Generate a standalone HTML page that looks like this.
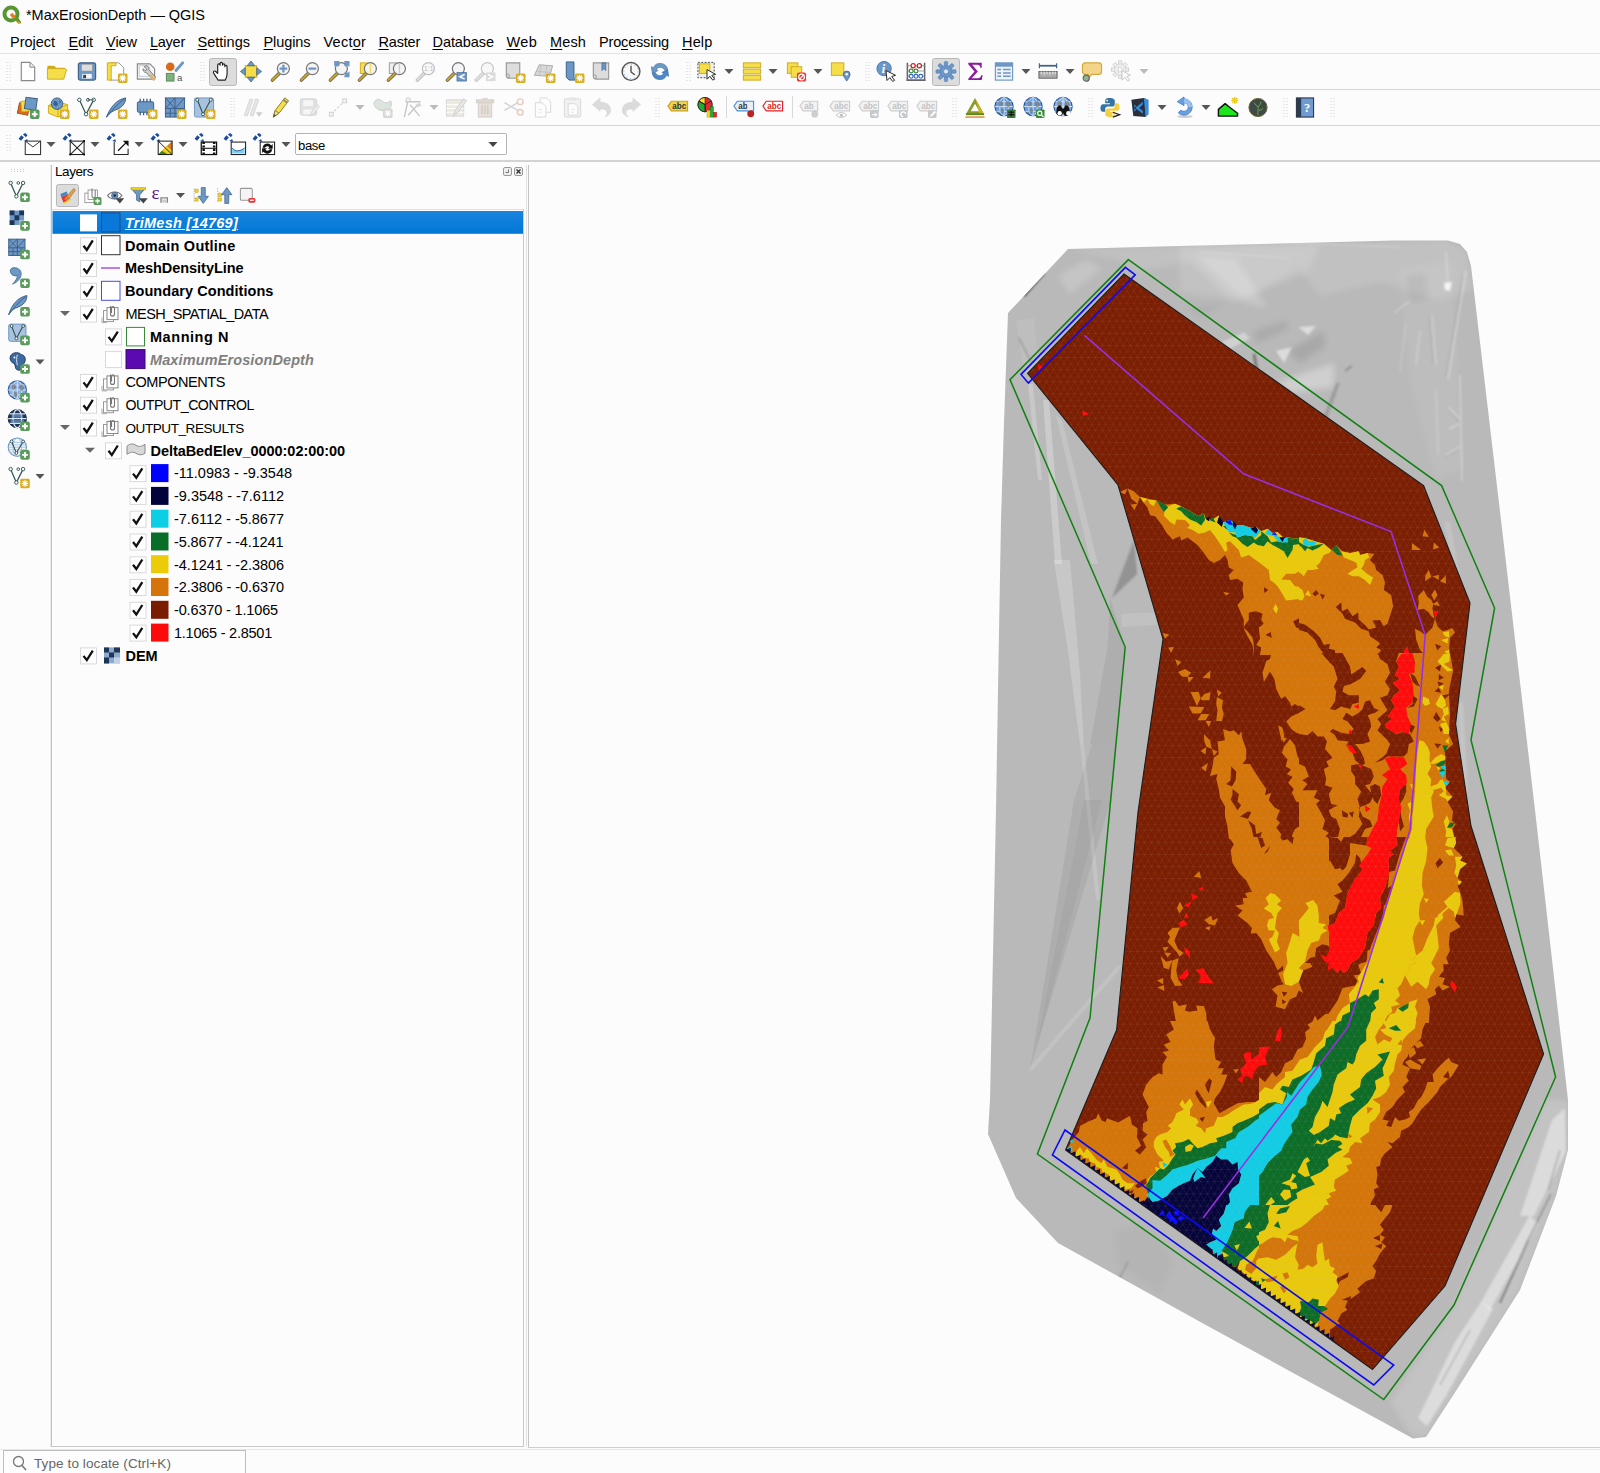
<!DOCTYPE html>
<html><head><meta charset="utf-8"><title>QGIS</title>
<style>
html,body{margin:0;padding:0;}
body{width:1600px;height:1473px;overflow:hidden;background:#fcfcfc;position:relative;font-family:'Liberation Sans',sans-serif;}
.t{position:absolute;white-space:pre;}
.ln{position:absolute;background:#d9d9d9;}
u{text-decoration:underline;text-underline-offset:2px;text-decoration-thickness:1px;}
svg{position:absolute;left:0;top:0;}
</style></head><body>
<!-- frame lines -->
<div class="ln" style="left:0;top:53px;width:1600px;height:1px;background:#e3e3e3"></div>
<div class="ln" style="left:0;top:89px;width:1600px;height:1px;background:#d6d6d6"></div>
<div class="ln" style="left:0;top:125px;width:1600px;height:1px;background:#d6d6d6"></div>
<div class="ln" style="left:0;top:160px;width:1600px;height:2px;background:#d3d3d3"></div>
<div class="ln" style="left:50px;top:165px;width:1px;height:1282px;background:#ececec"></div>
<div class="ln" style="left:51px;top:165px;width:1px;height:1282px;background:#c2c2c2"></div>
<div class="ln" style="left:52px;top:209px;width:472px;height:1px;background:#e0e0e0"></div>
<div class="ln" style="left:523px;top:209px;width:1px;height:1238px;background:#c8c8c8"></div>
<div class="ln" style="left:52px;top:1446px;width:472px;height:1px;background:#c8c8c8"></div>
<div class="ln" style="left:526px;top:165px;width:1px;height:1282px;background:#e2e2e2"></div>
<div class="ln" style="left:528px;top:165px;width:1px;height:1282px;background:#c4c4c4"></div>
<div class="ln" style="left:528px;top:1447px;width:1072px;height:1px;background:#cfcfcf"></div>
<div class="ln" style="left:0;top:1449px;width:1600px;height:1px;background:#e6e6e6"></div>
<!-- locator -->
<div style="position:absolute;left:3px;top:1450px;width:243px;height:23px;border:1px solid #bdbdbd;border-bottom:none;background:#fdfdfd;box-sizing:border-box"></div>
<svg width="1600" height="1473" viewBox="0 0 1600 1473">
<defs>
<linearGradient id="selg" x1="0" y1="0" x2="0" y2="1"><stop offset="0" stop-color="#1984de"/><stop offset="1" stop-color="#0277d6"/></linearGradient>
<clipPath id="mesh"><polygon points="1124,274 1423.6,485.6 1470,603 1455.6,724 1471,826 1543.6,1054 1445,1286 1372.5,1369.5 1065.6,1150 1116.6,1030 1138,812 1163,639 1118,485 1027.6,373.4"/></clipPath>
<clipPath id="dem"><polygon points="1068,249 1180,246 1280,243.6 1394,240.4 1448,240.4 1460,244 1467,252 1471,266 1501,520 1535,810 1568,1100 1568,1150 1556,1196 1520,1290 1454,1394 1426,1437 1413,1438.5 1300,1376.7 1200,1321.7 1058,1243 1016,1198 988,1134 990,1100 996,810 999,632 1001,520 1004,422 1008,313"/></clipPath>
<filter id="b0" x="-20%" y="-20%" width="140%" height="140%"><feGaussianBlur stdDeviation=".5"/></filter><filter id="b1" x="-20%" y="-20%" width="140%" height="140%"><feGaussianBlur stdDeviation=".9"/></filter><filter id="b2" x="-20%" y="-20%" width="140%" height="140%"><feGaussianBlur stdDeviation="3"/></filter>
<pattern id="tri" width="7" height="12.120" patternUnits="userSpaceOnUse"><path d="M0 0h7M0 6.060h7M0 0l3.500 6.060L7 0M0 12.120l3.500-6.060L7 12.120" fill="none" stroke="#c9a58f" stroke-width=".45" opacity=".38"/></pattern>
</defs>
<!-- qgis logo -->
<g transform="translate(2 5)"><circle cx="9" cy="9" r="6.500" fill="none" stroke="#589632" stroke-width="4"/><path d="M9 9l9 9" stroke="#ee7913" stroke-width="3.200"/><path d="M12.500 12.500l6 6" stroke="#f0c020" stroke-width="1.600"/><path d="M15 10.500l4.500 8-8-4.500z" fill="#589632"/></g>
<!-- locator icon -->
<circle cx="18.500" cy="1461.500" r="5" fill="none" stroke="#777" stroke-width="1.300"/><path d="M22 1465.500l4 4.500" stroke="#777" stroke-width="1.600"/>
<path d="M7 62v20M10 62v20" stroke="#d2d2d2" stroke-width="1" stroke-dasharray="1 2"/><path d="M7 98v20M10 98v20" stroke="#d2d2d2" stroke-width="1" stroke-dasharray="1 2"/><path d="M7 135v18M10 135v18" stroke="#d2d2d2" stroke-width="1" stroke-dasharray="1 2"/><path d="M201 62v20M204 62v20" stroke="#d2d2d2" stroke-width="1" stroke-dasharray="1 2"/><path d="M687 62v20M690 62v20" stroke="#d2d2d2" stroke-width="1" stroke-dasharray="1 2"/><path d="M866 62v20M869 62v20" stroke="#d2d2d2" stroke-width="1" stroke-dasharray="1 2"/><path d="M231 98v20M234 98v20" stroke="#d2d2d2" stroke-width="1" stroke-dasharray="1 2"/><path d="M656 98v20M659 98v20" stroke="#d2d2d2" stroke-width="1" stroke-dasharray="1 2"/><path d="M953 98v20M956 98v20" stroke="#d2d2d2" stroke-width="1" stroke-dasharray="1 2"/><path d="M1089 98v20M1092 98v20" stroke="#d2d2d2" stroke-width="1" stroke-dasharray="1 2"/><path d="M1284 98v20M1287 98v20" stroke="#d2d2d2" stroke-width="1" stroke-dasharray="1 2"/><path d="M1331 98v20M1334 98v20" stroke="#d2d2d2" stroke-width="1" stroke-dasharray="1 2"/><path d="M726.5 96v22M792.5 96v22" stroke="#d8d8d8"/><rect x="209.5" y="58.5" width="27" height="27" rx="2" fill="#dcdcdc" stroke="#b8b8b8"/><rect x="932.5" y="58.5" width="27" height="27" rx="2" fill="#dcdcdc" stroke="#b8b8b8"/><g transform="translate(16.5 60.0) scale(0.958)"><path d="M5 2.5h9l5 5v14H5z" fill="#fff" stroke="#888" stroke-width="1.2"/><path d="M14 2.5v5h5" fill="#eee" stroke="#888" stroke-width="1"/></g><g transform="translate(45.5 60.0) scale(0.958)"><path d="M2 6h7l2 2h9v3H2z" fill="#cfab1c"/><path d="M2 20V9h18l2 1-3 10z" fill="#f5de4a" stroke="#cfab1c" stroke-width="1"/></g><g transform="translate(75.5 60.0) scale(0.958)"><rect x="3" y="3" width="18" height="18" rx="2" fill="#6d97c4" stroke="#3b5f8a" stroke-width="1.2"/><rect x="6.5" y="4.5" width="11" height="7" fill="#ddd" stroke="#999" stroke-width=".6"/><rect x="7" y="14.5" width="10" height="5" fill="#f4f4f4"/><rect x="8" y="15.5" width="3" height="3.5" fill="#345"/></g><g transform="translate(104.5 60.0) scale(0.958)"><path d="M6 3h9l5 5v13H6z" fill="#fff" stroke="#999"/><path d="M3 3h9v3H7v15H3z" fill="#f5de4a" stroke="#cfab1c" stroke-width="1"/><rect x="14" y="14" width="10" height="10" rx="1.5" fill="#dcae1f"/><path d="M19 15.5v7M15.5 19h7M16.5 16.5l5 5M21.5 16.5l-5 5" stroke="#fff" stroke-width="1.3"/></g><g transform="translate(134.5 60.0) scale(0.958)"><path d="M3 4h13l5 5v11H3z" fill="#f6f6f6" stroke="#888" stroke-width="1.2"/><path d="M5 6h10v11H5z" fill="#fff" stroke="#b8cde4"/><path d="M10 7a3 3 0 0 1 5 3l7 8-2 3-8-8a3 3 0 0 1-3-4l2 2 2-1z" fill="#ccc" stroke="#666" stroke-width=".8"/><path d="M17 15l5 5-2 2-5-5z" fill="#e1b36a"/></g><g transform="translate(163.5 60.0) scale(0.958)"><circle cx="7" cy="7" r="4.5" fill="#d86a1c"/><rect x="3" y="14" width="8" height="8" fill="#7fb17f" stroke="#5a8c5a"/><path d="M13 11l7-8" stroke="#6d97c4" stroke-width="3" stroke-linecap="round"/><text x="14" y="22" font-size="10" font-family="Liberation Sans" fill="#555">a</text></g><g transform="translate(210.5 60.0) scale(0.958)"><path d="M8 21c-2-3-4-6-5-8 0-1.5 1.5-2 2.500-1l2 2V5.500c0-2 2.500-2 2.500 0V4c0-2 2.500-2 2.500 0v1.500c0-2 2.500-2 2.500 0V7c0-1.800 2.300-1.800 2.300 0v8c0 3-1 4.500-2 6z" fill="#fff" stroke="#222" stroke-width="1.2" stroke-linejoin="round"/></g><g transform="translate(239.5 60.0) scale(0.958)"><rect x="6" y="6" width="12" height="12" fill="#f5de4a" stroke="#cfab1c"/><path d="M12 1l4 5h-8zM12 23l4-5h-8zM1 12l5-4v8zM23 12l-5-4v8z" fill="#6d97c4" stroke="#3b5f8a" stroke-width=".8"/></g><g transform="translate(269.5 60.0) scale(0.958)"><path d="M3 21l7-7" stroke="#555" stroke-width="3.6" stroke-linecap="round"/><path d="M3 21l7-7" stroke="#caa52b" stroke-width="2.2" stroke-linecap="round"/><circle cx="14.5" cy="9" r="6.3" fill="#f4f4f4" stroke="#777" stroke-width="1.3"/><path d="M14.500 5v8M10.500 9h8" stroke="#6d97c4" stroke-width="2.4"/></g><g transform="translate(298.5 60.0) scale(0.958)"><path d="M3 21l7-7" stroke="#555" stroke-width="3.6" stroke-linecap="round"/><path d="M3 21l7-7" stroke="#caa52b" stroke-width="2.2" stroke-linecap="round"/><circle cx="14.5" cy="9" r="6.3" fill="#f4f4f4" stroke="#777" stroke-width="1.3"/><path d="M10.500 9h8" stroke="#6d97c4" stroke-width="2.4"/></g><g transform="translate(327.5 60.0) scale(0.958)"><path d="M3 21l7-7" stroke="#555" stroke-width="3.6" stroke-linecap="round"/><path d="M3 21l7-7" stroke="#caa52b" stroke-width="2.2" stroke-linecap="round"/><circle cx="14.5" cy="9" r="6.3" fill="#f4f4f4" stroke="#777" stroke-width="1.3"/><path d="M8 2h5l-5 5zM22 2v5l-5-5zM22 17v-5l-5 5zM8 12v4z" fill="#6d97c4"/><path d="M7 1h6l-2 2 2 2-2 2-2-2-2 2zM23 1v6l-2-2-2 2-2-2 2-2-2-2zM23 18h-6l2-2-2-2 2-2 2 2 2-2z" fill="#6d97c4"/></g><g transform="translate(356.5 60.0) scale(0.958)"><rect x="4" y="3" width="7" height="11" fill="#f5de4a" stroke="#cfab1c"/><path d="M3 21l7-7" stroke="#555" stroke-width="3.6" stroke-linecap="round"/><path d="M3 21l7-7" stroke="#caa52b" stroke-width="2.2" stroke-linecap="round"/><circle cx="14.5" cy="9" r="6.3" fill="#f4f4f4" stroke="#777" stroke-width="1.3"/><path d="M14.500 4v10" stroke="#f5de4a" stroke-width="1.5"/></g><g transform="translate(385.5 60.0) scale(0.958)"><rect x="4" y="3" width="7" height="11" fill="#eee" stroke="#999"/><path d="M3 21l7-7" stroke="#555" stroke-width="3.6" stroke-linecap="round"/><path d="M3 21l7-7" stroke="#caa52b" stroke-width="2.2" stroke-linecap="round"/><circle cx="14.5" cy="9" r="6.3" fill="#f4f4f4" stroke="#777" stroke-width="1.3"/><path d="M14.500 4v10" stroke="#ccc" stroke-width="1.5"/></g><g transform="translate(414.5 60.0) scale(0.958)"><g opacity=".45"><path d="M3 21l7-7" stroke="#555" stroke-width="3.6" stroke-linecap="round"/><path d="M3 21l7-7" stroke="#bbb" stroke-width="2.2" stroke-linecap="round"/><circle cx="14.5" cy="9" r="6.3" fill="#f4f4f4" stroke="#777" stroke-width="1.3"/><text x="10" y="12" font-size="7" font-family="Liberation Sans" fill="#666">1:1</text></g></g><g transform="translate(444.5 60.0) scale(0.958)"><path d="M3 21l7-7" stroke="#555" stroke-width="3.6" stroke-linecap="round"/><path d="M3 21l7-7" stroke="#caa52b" stroke-width="2.2" stroke-linecap="round"/><circle cx="14.5" cy="9" r="6.3" fill="#f4f4f4" stroke="#777" stroke-width="1.3"/><rect x="13" y="13" width="10" height="9" fill="#6d97c4" stroke="#3b5f8a" stroke-width=".6"/><path d="M21 15l-5 2.500 5 2.500" stroke="#fff" stroke-width="1.6" fill="none"/></g><g transform="translate(473.5 60.0) scale(0.958)"><g opacity=".4"><path d="M3 21l7-7" stroke="#555" stroke-width="3.6" stroke-linecap="round"/><path d="M3 21l7-7" stroke="#bbb" stroke-width="2.2" stroke-linecap="round"/><circle cx="14.5" cy="9" r="6.3" fill="#f4f4f4" stroke="#777" stroke-width="1.3"/><rect x="13" y="13" width="10" height="9" fill="#aaa"/><path d="M15 15l5 2.500-5 2.500" stroke="#fff" stroke-width="1.6" fill="none"/></g></g><g transform="translate(502.5 60.0) scale(0.958)"><path d="M4 3h14v16H7c-2 0-3-1-3-3z" fill="#ddd" stroke="#999" stroke-width="1.2"/><path d="M4 16c0-2 3-2 3 0v3" fill="none" stroke="#999"/><rect x="14" y="14" width="10" height="10" rx="1.5" fill="#dcae1f"/><path d="M19 15.5v7M15.5 19h7M16.5 16.5l5 5M21.5 16.5l-5 5" stroke="#fff" stroke-width="1.3"/></g><g transform="translate(532.5 60.0) scale(0.958)"><path d="M2 16l5-11 14 1-3 11z" fill="#d8d8d8" stroke="#aaa"/><path d="M5 12l14 1M9 5l-2 11M15 6l-2 11" stroke="#bbb" stroke-width=".8"/><rect x="14" y="14" width="10" height="10" rx="1.5" fill="#dcae1f"/><path d="M19 15.5v7M15.5 19h7M16.5 16.5l5 5M21.5 16.5l-5 5" stroke="#fff" stroke-width="1.3"/></g><g transform="translate(561.5 60.0) scale(0.958)"><path d="M5 2h8v16l3 3H8l-3-3z" fill="#6d97c4" stroke="#3b5f8a" stroke-width="1"/><rect x="14" y="14" width="10" height="10" rx="1.5" fill="#dcae1f"/><path d="M19 15.5v7M15.5 19h7M16.5 16.5l5 5M21.5 16.5l-5 5" stroke="#fff" stroke-width="1.3"/></g><g transform="translate(589.5 60.0) scale(0.958)"><path d="M4 3h16v17H7c-2 0-3-1-3-3z" fill="#ddd" stroke="#999" stroke-width="1.2"/><path d="M4 17c0-2 3-2 3 0v3" fill="none" stroke="#999"/><path d="M13 3h4v8l-2-2-2 2z" fill="#6d97c4" stroke="#3b5f8a" stroke-width=".7"/></g><g transform="translate(619.5 60.0) scale(0.958)"><circle cx="12" cy="12" r="9.300" fill="#fafafa" stroke="#555" stroke-width="1.5"/><circle cx="12" cy="12" r="7.500" fill="none" stroke="#6d97c4" stroke-width="1" stroke-dasharray="1 2.900"/><path d="M12 6v6.500l4 3" stroke="#555" stroke-width="1.5" fill="none"/></g><g transform="translate(648.5 60.0) scale(0.958)"><path d="M20 10a8 8 0 0 0-15-2l-2-1 1 7 6-3-2-1a5 5 0 0 1 9 1z" fill="#6d97c4" stroke="#4a78ad" stroke-width=".7"/><path d="M4 14a8 8 0 0 0 15 2l2 1-1-7-6 3 2 1a5 5 0 0 1-9-1z" fill="#4f86c6" stroke="#3b6ea5" stroke-width=".7"/></g><g transform="translate(695.5 60.0) scale(0.958)"><rect x="2.500" y="2.500" width="17" height="16" fill="#eee" stroke="#444" stroke-dasharray="2 1.500"/><rect x="4" y="4" width="11" height="10" fill="#f5de4a" stroke="#cfab1c"/><path d="M12 10l9 5-4 1 3 4-2 1-3-4-3 3z" fill="#fff" stroke="#222" stroke-width="1"/></g><g transform="translate(740.5 60.0) scale(0.958)"><rect x="3" y="3" width="18" height="5" fill="#f5de4a" stroke="#cfab1c"/><rect x="3" y="9.500" width="18" height="5" fill="#f5de4a" stroke="#cfab1c"/><rect x="3" y="16" width="18" height="5" fill="#f5de4a" stroke="#cfab1c"/></g><g transform="translate(784.5 60.0) scale(0.958)"><rect x="3" y="3" width="11" height="11" fill="#f5de4a" stroke="#cfab1c"/><rect x="7" y="7" width="11" height="11" fill="#f5de4a" stroke="#cfab1c"/><rect x="13" y="13" width="9.500" height="9.500" rx="2" fill="#e33"/><circle cx="17.800" cy="17.800" r="3" fill="none" stroke="#fff" stroke-width="1.300"/><path d="M15.800 19.800l4-4" stroke="#fff" stroke-width="1.300"/></g><g transform="translate(828.5 60.0) scale(0.958)"><rect x="3" y="3" width="13" height="13" fill="#f5de4a" stroke="#cfab1c"/><path d="M19 22c-2-3-3.500-5-3.500-7a3.500 3.500 0 0 1 7 0c0 2-1.500 4-3.500 7z" fill="#6d97c4" stroke="#3b5f8a" stroke-width=".8"/><circle cx="19" cy="15" r="1.300" fill="#fff"/></g><g transform="translate(874.5 60.0) scale(0.958)"><circle cx="10" cy="9" r="7.500" fill="#6d97c4" stroke="#4a78ad"/><text x="7.500" y="14" font-size="13" font-weight="700" font-style="italic" font-family="Liberation Serif" fill="#fff">i</text><path d="M12 11l10 5-4 1.200 3 4-2 1.200-3-4-3 3z" fill="#fff" stroke="#222" stroke-width="1"/></g><g transform="translate(904.5 60.0) scale(0.958)"><path d="M3 3v18M21 3v18M2 21h20" stroke="#666" stroke-width="1.600"/><path d="M3 6h18M3 11.500h18M3 17h18" stroke="#888" stroke-width=".8"/><circle cx="9" cy="6" r="2.200" fill="#fff" stroke="#c22" stroke-width="1.300"/><circle cx="15.500" cy="6" r="2.200" fill="#fff" stroke="#c22" stroke-width="1.300"/><circle cx="7" cy="11.500" r="2" fill="#fff" stroke="#3a8a3a" stroke-width="1.200"/><circle cx="12" cy="11.500" r="2" fill="#fff" stroke="#3a8a3a" stroke-width="1.200"/><circle cx="7" cy="17" r="2" fill="#fff" stroke="#36c" stroke-width="1.200"/><circle cx="12" cy="17" r="2" fill="#fff" stroke="#36c" stroke-width="1.200"/><circle cx="17" cy="17" r="2" fill="#fff" stroke="#36c" stroke-width="1.200"/></g><g transform="translate(934.5 60.0) scale(0.958)"><g transform="translate(12 12)"><g fill="#6d97c4" stroke="#4a7cc0" stroke-width=".6"><rect x="-1.800" y="-10.500" width="3.600" height="6" rx="1" transform="rotate(0)"/><rect x="-1.800" y="-10.500" width="3.600" height="6" rx="1" transform="rotate(45)"/><rect x="-1.800" y="-10.500" width="3.600" height="6" rx="1" transform="rotate(90)"/><rect x="-1.800" y="-10.500" width="3.600" height="6" rx="1" transform="rotate(135)"/><rect x="-1.800" y="-10.500" width="3.600" height="6" rx="1" transform="rotate(180)"/><rect x="-1.800" y="-10.500" width="3.600" height="6" rx="1" transform="rotate(225)"/><rect x="-1.800" y="-10.500" width="3.600" height="6" rx="1" transform="rotate(270)"/><rect x="-1.800" y="-10.500" width="3.600" height="6" rx="1" transform="rotate(315)"/></g><circle r="6" fill="#6d97c4" stroke="#4a7cc0" stroke-width=".6"/><circle r="2.600" fill="#dfe6ee" stroke="#4a7cc0" stroke-width=".6"/></g></g><g transform="translate(963.5 60.0) scale(0.958)"><path d="M5 3h14v5h-1.500c0-2-1-3-3-3H9l6 7-6.500 7H15c2 0 3-1 3.500-3H20l-1 5H5v-1.500L11.500 12 5 4.500z" fill="#8a1aa0"/></g><g transform="translate(992.5 60.0) scale(0.958)"><rect x="3" y="3" width="18" height="18" fill="#eef3fa" stroke="#6d97c4" stroke-width="1.200"/><rect x="3" y="3" width="18" height="4" fill="#6d97c4"/><path d="M5 10h4M11 10h8M5 13.500h4M11 13.500h8M5 17h4M11 17h8" stroke="#6d97c4" stroke-width="1.600"/></g><g transform="translate(1036.5 60.0) scale(0.958)"><path d="M3 6h18" stroke="#3b5f8a" stroke-width="1.800"/><path d="M3 3.500v5M21 3.500v5" stroke="#3b5f8a" stroke-width="1.200"/><rect x="2.500" y="12" width="19" height="7" fill="#aaa" stroke="#666"/><path d="M5 12v3M8 12v4M11 12v3M14 12v4M17 12v3M19.500 12v3" stroke="#eee" stroke-width="1"/></g><g transform="translate(1080.5 60.0) scale(0.958)"><path d="M5 3h14a3 3 0 0 1 3 3v6a3 3 0 0 1-3 3h-7l-4 4v-4H5a3 3 0 0 1-3-3V6a3 3 0 0 1 3-3z" fill="#f3d488" stroke="#d1a93c" stroke-width="1.200"/><circle cx="6" cy="19" r="3.200" fill="#8fb58f" stroke="#666" stroke-width="1.200"/></g><g transform="translate(1110.5 60.0) scale(0.958)"><g opacity=".4"><g transform="translate(10 10)" fill="#ddd" stroke="#888" stroke-width=".8"><rect x="-1.800" y="-9" width="3.600" height="5" transform="rotate(0)"/><rect x="-1.800" y="-9" width="3.600" height="5" transform="rotate(45)"/><rect x="-1.800" y="-9" width="3.600" height="5" transform="rotate(90)"/><rect x="-1.800" y="-9" width="3.600" height="5" transform="rotate(135)"/><rect x="-1.800" y="-9" width="3.600" height="5" transform="rotate(180)"/><rect x="-1.800" y="-9" width="3.600" height="5" transform="rotate(225)"/><rect x="-1.800" y="-9" width="3.600" height="5" transform="rotate(270)"/><rect x="-1.800" y="-9" width="3.600" height="5" transform="rotate(315)"/><circle r="6"/></g><path d="M8 7l6 3-6 3z" fill="#fff" stroke="#999"/><path d="M12 11l9 5-4 1 3 4-2 1-3-4-3 3z" fill="#fff" stroke="#777" stroke-width="1"/></g></g><path d="M724.5 69.0h9l-4.5 5z" fill="#555"/><path d="M768.5 69.0h9l-4.5 5z" fill="#555"/><path d="M813.5 69.0h9l-4.5 5z" fill="#555"/><path d="M1021.5 69.0h9l-4.5 5z" fill="#555"/><path d="M1065.5 69.0h9l-4.5 5z" fill="#555"/><path d="M1139.5 69.0h9l-4.5 5z" fill="#bbb"/><g transform="translate(16.5 96.0) scale(0.958)"><rect x="2" y="8" width="11" height="11" fill="#d86a1c" stroke="#a64f12" transform="rotate(12 7 13)"/><rect x="5" y="5" width="11" height="11" fill="#f5de4a" stroke="#cfab1c" transform="rotate(-6 10 10)"/><rect x="9" y="2" width="12" height="12" fill="#6d97c4" stroke="#3b5f8a" transform="rotate(8 15 8)"/><rect x="14" y="14" width="10" height="10" rx="2" fill="#5a9a5a"/><path d="M19 16v6M16 19h6" stroke="#fff" stroke-width="2"/></g><g transform="translate(46.5 96.0) scale(0.958)"><path d="M2 10l9-4 11 3v9l-10 4-10-4z" fill="#f5de4a" stroke="#cfab1c"/><path d="M2 10l10 4v8" fill="none" stroke="#cfab1c"/><path d="M12 14l10-5" stroke="#cfab1c"/><circle cx="11" cy="8" r="6" fill="#6d97c4" stroke="#3b5f8a"/><path d="M8 5l3 1 1 3-2 2-3-2zM13 4l2 2-1 2z" fill="#35618f"/><rect x="14" y="14" width="10" height="10" rx="1.5" fill="#dcae1f"/><path d="M19 15.5v7M15.5 19h7M16.5 16.5l5 5M21.5 16.5l-5 5" stroke="#fff" stroke-width="1.3"/></g><g transform="translate(75.5 96.0) scale(0.958)"><path d="M4 4l7 15 8-15" fill="none" stroke="#355" stroke-width="1.300"/><circle cx="4" cy="4" r="1.800" fill="#fff" stroke="#355"/><circle cx="11" cy="19" r="1.800" fill="#fff" stroke="#355"/><circle cx="19" cy="4" r="1.800" fill="#fff" stroke="#355"/><circle cx="13" cy="4" r="1.500" fill="#fff" stroke="#355"/><path d="M13 4h6" stroke="#355"/><rect x="14" y="14" width="10" height="10" rx="1.5" fill="#dcae1f"/><path d="M19 15.5v7M15.5 19h7M16.5 16.5l5 5M21.5 16.5l-5 5" stroke="#fff" stroke-width="1.3"/></g><g transform="translate(104.5 96.0) scale(0.958)"><path d="M2 22C6 12 12 4 22 2c0 6-4 10-9 12-4 1.500-7 3-9 6z" fill="#6d97c4" stroke="#3b5f8a"/><path d="M2 22C8 14 14 8 21 3" stroke="#3b5f8a" fill="none"/><rect x="14" y="14" width="10" height="10" rx="1.5" fill="#dcae1f"/><path d="M19 15.5v7M15.5 19h7M16.5 16.5l5 5M21.5 16.5l-5 5" stroke="#fff" stroke-width="1.3"/></g><g transform="translate(134.5 96.0) scale(0.958)"><rect x="3" y="6" width="17" height="11" rx="1.500" fill="#6d97c4" stroke="#3b5f8a"/><path d="M6 6V3M9.500 6V3M13 6V3M16.500 6V3M6 17v3M9.500 17v3M13 17v3M16.500 17v3" stroke="#3b5f8a" stroke-width="1.400"/><rect x="14" y="14" width="10" height="10" rx="1.5" fill="#dcae1f"/><path d="M19 15.5v7M15.5 19h7M16.5 16.5l5 5M21.5 16.5l-5 5" stroke="#fff" stroke-width="1.3"/></g><g transform="translate(163.5 96.0) scale(0.958)"><rect x="2" y="2" width="20" height="20" fill="#6d97c4" stroke="#3b5f8a"/><path d="M2 2l10 11M12 2L2 13M12 2v20M12 13l10-11M2 13h20M2 18h20M7 13v9M17 13v9" stroke="#3b5f8a" stroke-width="1"/><rect x="14" y="14" width="10" height="10" rx="1.5" fill="#dcae1f"/><path d="M19 15.5v7M15.5 19h7M16.5 16.5l5 5M21.5 16.5l-5 5" stroke="#fff" stroke-width="1.3"/></g><g transform="translate(192.5 96.0) scale(0.958)"><rect x="2" y="2" width="20" height="20" rx="2" fill="#a9c3df" stroke="#6d97c4"/><path d="M5 4l6 15 8-15" fill="none" stroke="#355" stroke-width="1.200"/><circle cx="5" cy="4" r="1.600" fill="#fff" stroke="#355"/><circle cx="11" cy="19" r="1.600" fill="#fff" stroke="#355"/><circle cx="19" cy="4" r="1.600" fill="#fff" stroke="#355"/><rect x="14" y="14" width="10" height="10" rx="1.5" fill="#dcae1f"/><path d="M19 15.5v7M15.5 19h7M16.5 16.5l5 5M21.5 16.5l-5 5" stroke="#fff" stroke-width="1.3"/></g><g transform="translate(240.5 96.0) scale(0.958)"><g opacity=".45"><path d="M4 20l6-17 3 1-6 17zM10 20l6-17 3 1-6 17z" fill="#ccc" stroke="#aaa"/><path d="M16 17h7l-3.500 5z" fill="#999"/></g></g><g transform="translate(268.5 96.0) scale(0.958)"><path d="M5 22l2-7L17 2l4 3-10 13z" fill="#f5de4a" stroke="#8a7a2a" stroke-width="1"/><path d="M5 22l2-7 4 3z" fill="#e8d9b5" stroke="#8a7a2a"/><path d="M5 22l1-3 1.500 1.200z" fill="#333"/><path d="M15.500 4l4 3" stroke="#888" stroke-width="2"/></g><g transform="translate(297.5 96.0) scale(0.958)"><g opacity=".4"><rect x="3" y="3" width="17" height="17" rx="2" fill="#bbb" stroke="#999"/><rect x="6" y="4.500" width="10" height="6" fill="#eee"/><rect x="6" y="14" width="10" height="5" fill="#eee"/><path d="M13 21l2-5 6-7 2 2-6 7z" fill="#ddd" stroke="#999"/></g></g><g transform="translate(326.5 96.0) scale(0.958)"><g opacity=".45"><path d="M5 19L19 5" stroke="#999" stroke-width="1.200" stroke-dasharray="2.500 2"/><rect x="3" y="17" width="4" height="4" fill="#eee" stroke="#999"/><rect x="17" y="3" width="4" height="4" fill="#eee" stroke="#999"/></g></g><g transform="translate(371.5 96.0) scale(0.958)"><g opacity=".45"><path d="M3 6c3-4 7-2 9 0s6 1 8-1c2 4 0 9-4 9-3 0-4 2-7 1S1 10 3 6z" fill="#b9c9b9" stroke="#8a9a8a"/><rect x="12" y="13" width="10" height="10" rx="1.500" fill="#aaa"/><path d="M17 14.500v7M13.500 18h7M14.500 15.500l5 5M19.500 15.500l-5 5" stroke="#fff" stroke-width="1.200"/></g></g><g transform="translate(400.5 96.0) scale(0.958)"><g opacity=".45"><path d="M4 22L8 4M5 6h16M10 9l10 12M8 20L18 9" stroke="#888" stroke-width="1.500" fill="none"/><circle cx="8" cy="4" r="2.200" fill="#eee" stroke="#888"/><path d="M16 9l4-2 2 3-4 2z" fill="#aaa"/></g></g><g transform="translate(444.5 96.0) scale(0.958)"><g opacity=".45"><rect x="2" y="4" width="18" height="17" fill="#ddd6c0" stroke="#aaa"/><path d="M2 9h18M2 13h18M2 17h18" stroke="#fff" stroke-width="1.200"/><path d="M9 21l2-6L20 3l3 2-9 12z" fill="#ccc" stroke="#999"/></g></g><g transform="translate(473.5 96.0) scale(0.958)"><g opacity=".4"><rect x="5" y="7" width="14" height="15" fill="#c9b8a8" stroke="#9a8a7a"/><rect x="3" y="4" width="18" height="3" fill="#b5a595" stroke="#9a8a7a"/><rect x="9" y="2" width="6" height="2" fill="#b5a595"/><path d="M9 10v9M12 10v9M15 10v9" stroke="#8a7a6a" stroke-width="1.200"/></g></g><g transform="translate(502.5 96.0) scale(0.958)"><g opacity=".4"><path d="M2 7l14 8M2 15l14-8" stroke="#999" stroke-width="1.500"/><circle cx="18.500" cy="6" r="3" fill="none" stroke="#c9866a" stroke-width="1.500"/><circle cx="18.500" cy="17" r="3" fill="none" stroke="#c9866a" stroke-width="1.500"/></g></g><g transform="translate(531.5 96.0) scale(0.958)"><g opacity=".35"><path d="M9 2h7l4 4v11H9z" fill="#fff" stroke="#999"/><path d="M4 7h7l4 4v11H4z" fill="#fff" stroke="#999"/><path d="M7 14h4M7 17h3" stroke="#bbb"/></g></g><g transform="translate(561.5 96.0) scale(0.958)"><g opacity=".35"><rect x="3" y="3" width="17" height="19" rx="1" fill="#ddd" stroke="#999"/><rect x="8" y="1.500" width="7" height="3" fill="#bbb"/><path d="M7 8h7l3 3v9H7z" fill="#fff" stroke="#999"/><path d="M10 14h4M10 17h3" stroke="#bbb"/></g></g><g transform="translate(590.5 96.0) scale(0.958)"><g opacity=".4"><path d="M2 9l8-7v4.500c7 0 11 3 11 8.500 0 4-3 6-6 6.500 2-1.500 3-3 2-5.500-1-2-3-2.500-7-2.500V16z" fill="#aaa" stroke="#999" stroke-width=".6"/></g></g><g transform="translate(619.5 96.0) scale(0.958)"><g opacity=".4"><path d="M22 9l-8-7v4.500C7 6.500 3 9.500 3 15c0 4 3 6 6 6.500-2-1.500-3-3-2-5.500 1-2 3-2.500 7-2.500V16z" fill="#aaa" stroke="#999" stroke-width=".6"/></g></g><g transform="translate(666.5 96.0) scale(0.958)"><g opacity="1"><path d="M1.500 10.500l3.500-5h17v10h-17z" fill="#f1d24a" stroke="#c9a21b" stroke-width="1.200"/><text x="6" y="14" font-size="8.500" font-weight="700" font-family="Liberation Sans" fill="#333">abc</text></g></g><g transform="translate(696.5 96.0) scale(0.958)"><circle cx="9" cy="9" r="7.500" fill="#e23" stroke="#222"/><path d="M9 9V1.500A7.500 7.500 0 0 0 2.500 5.500z" fill="#fd2" stroke="#222" stroke-width=".8"/><path d="M9 9L2.500 5.500A7.500 7.500 0 0 0 9 16.500z" fill="#2a3" stroke="#222" stroke-width=".8"/><path d="M9 9v7.500M9 9l6.500-4M9 9L2.500 5.500" stroke="#222" stroke-width=".8"/><rect x="11" y="15" width="3" height="7" fill="#fd2" stroke="#a80" stroke-width=".5"/><rect x="14.500" y="11" width="3" height="11" fill="#2a3" stroke="#171" stroke-width=".5"/><rect x="18" y="17" width="3" height="5" fill="#e23" stroke="#911" stroke-width=".5"/></g><g transform="translate(732.5 96.0) scale(0.958)"><g opacity="1"><path d="M1.500 10.500l3.500-5h17v10h-17z" fill="#e6eef8" stroke="#4a90d9" stroke-width="1.200"/><text x="6" y="14" font-size="8.500" font-weight="700" font-family="Liberation Sans" fill="#333">ab</text></g><path d="M16 9l2 7" stroke="#eee" stroke-width="2"/><circle cx="19" cy="18.500" r="3.600" fill="#b22"/></g><g transform="translate(761.5 96.0) scale(0.958)"><g opacity="1"><path d="M1.500 10.500l3.500-5h17v10h-17z" fill="#fff" stroke="#d22" stroke-width="1.200"/><text x="6" y="14" font-size="8.500" font-weight="700" font-family="Liberation Sans" fill="#d22">abc</text></g></g><g transform="translate(798.5 96.0) scale(0.958)"><g opacity="0.7"><path d="M1.500 10.500l3.500-5h15v10h-15z" fill="#eee" stroke="#bbb" stroke-width="1.200"/><text x="6" y="14" font-size="8.500" font-weight="700" font-family="Liberation Sans" fill="#aaa">ab</text></g><circle cx="17" cy="19" r="3.500" fill="#bbb" opacity=".7"/></g><g transform="translate(828.5 96.0) scale(0.958)"><g opacity="0.7"><path d="M1.500 10.500l3.500-5h17v10h-17z" fill="#eee" stroke="#bbb" stroke-width="1.200"/><text x="6" y="14" font-size="8.500" font-weight="700" font-family="Liberation Sans" fill="#aaa">abc</text></g><path d="M8 20c3-3.500 8-3.500 11 0-3 3-8 3-11 0z" fill="#fff" stroke="#bbb"/><circle cx="13.500" cy="20" r="1.600" fill="#bbb"/></g><g transform="translate(857.5 96.0) scale(0.958)"><g opacity="0.7"><path d="M1.500 10.500l3.500-5h17v10h-17z" fill="#eee" stroke="#bbb" stroke-width="1.200"/><text x="6" y="14" font-size="8.500" font-weight="700" font-family="Liberation Sans" fill="#aaa">abc</text></g><rect x="13" y="15" width="9" height="8" rx="1.500" fill="#c4c8cc"/><path d="M15 19h3v-2l3 2.500-3 2.500v-2h-3z" fill="#fff"/></g><g transform="translate(886.5 96.0) scale(0.958)"><g opacity="0.7"><path d="M1.500 10.500l3.500-5h17v10h-17z" fill="#eee" stroke="#bbb" stroke-width="1.200"/><text x="6" y="14" font-size="8.500" font-weight="700" font-family="Liberation Sans" fill="#aaa">abc</text></g><rect x="13" y="15" width="9" height="8" rx="1.500" fill="#c4c8cc"/><path d="M20 19a2.500 2.500 0 1 0-2.500 2.500" stroke="#fff" stroke-width="1.300" fill="none"/></g><g transform="translate(915.5 96.0) scale(0.958)"><g opacity="0.7"><path d="M1.500 10.500l3.500-5h17v10h-17z" fill="#eee" stroke="#bbb" stroke-width="1.200"/><text x="6" y="14" font-size="8.500" font-weight="700" font-family="Liberation Sans" fill="#aaa">abc</text></g><rect x="13" y="15" width="9" height="8" rx="1.500" fill="#c9c9c9"/><path d="M15 22l1-2.500 4-4 1.500 1.500-4 4z" fill="#fff"/></g><g transform="translate(963.5 96.0) scale(0.958)"><path d="M12 2L2.500 19h19zM12 8l-4.500 8h9z" fill="#8a9a2a" fill-rule="evenodd"/><path d="M12 2l9.500 17H17z" fill="#c9b21f"/><path d="M2.500 19h19" stroke="#5a8a2a" stroke-width="2"/><path d="M2 22h20" stroke="#e08a2a" stroke-width="1.500"/></g><g transform="translate(993.5 96.0) scale(0.958)"><circle cx="11" cy="11" r="9.500" fill="#6a9fe0" stroke="#2a5a9a" stroke-width="1.200"/><ellipse cx="11" cy="11" rx="4.500" ry="9.500" fill="none" stroke="#dbe7f5" stroke-width=".9"/><path d="M1.500 11h19M3 6h16M3 16h16M11 1.500v19" stroke="#dbe7f5" stroke-width=".9"/><path d="M5 6l3-1 2 2-1 3-3 1zM13 5l4 1 1 4-3 2-2-3zM8 13l3 1v3l-2 2-2-3z" fill="#777" opacity=".75"/><rect x="14" y="14" width="9" height="9" rx="1" fill="#3a7a3a"/><path d="M15.500 17h6M15.500 19.500h6M18.500 15.500v6" stroke="#111" stroke-width="1.200"/></g><g transform="translate(1022.5 96.0) scale(0.958)"><circle cx="11" cy="11" r="9.500" fill="#6a9fe0" stroke="#2a5a9a" stroke-width="1.200"/><ellipse cx="11" cy="11" rx="4.500" ry="9.500" fill="none" stroke="#dbe7f5" stroke-width=".9"/><path d="M1.500 11h19M3 6h16M3 16h16M11 1.500v19" stroke="#dbe7f5" stroke-width=".9"/><path d="M5 6l3-1 2 2-1 3-3 1zM13 5l4 1 1 4-3 2-2-3zM8 13l3 1v3l-2 2-2-3z" fill="#777" opacity=".75"/><rect x="14" y="14" width="9" height="9" rx="1" fill="#3a8a3a"/><circle cx="18" cy="18" r="2.200" fill="none" stroke="#fff" stroke-width="1.200"/><path d="M19.500 19.500l2.500 2.500" stroke="#fff" stroke-width="1.300"/></g><g transform="translate(1052.5 96.0) scale(0.958)"><circle cx="11" cy="11" r="9.500" fill="#8ab0e0" stroke="#2a5a9a" stroke-width="1.200"/><ellipse cx="11" cy="11" rx="4.500" ry="9.500" fill="none" stroke="#dbe7f5" stroke-width=".9"/><path d="M1.500 11h19M3 6h16M3 16h16M11 1.500v19" stroke="#dbe7f5" stroke-width=".9"/><path d="M5 6l3-1 2 2-1 3-3 1zM13 5l4 1 1 4-3 2-2-3zM8 13l3 1v3l-2 2-2-3z" fill="#777" opacity=".75"/><path d="M4 17c0-3 1-7 3-7h2l1 3h2l1-3h2c2 0 3 4 3 7a3.500 3.500 0 0 1-7 0h-0a3.500 3.500 0 0 1-7 0z" fill="#111"/><circle cx="7.500" cy="18" r="2.300" fill="#fff"/><circle cx="16.500" cy="18" r="2.300" fill="#fff"/></g><g transform="translate(1098.5 96.0) scale(0.958)"><path d="M11.500 2c-4 0-4.500 1.800-4.500 3v2.500h5v1H4.500C2.500 8.500 2 11 2 12.500s.5 4 2.500 4H7v-3c0-1.500 1.200-2.500 2.500-2.500h5c1.200 0 2.500-1 2.500-2.500V5c0-1.500-1.500-3-5.500-3z" fill="#3673a5"/><circle cx="9" cy="4.800" r="1" fill="#fff"/><path d="M12.500 22c4 0 4.500-1.800 4.500-3v-2.500h-5v-1h7.500c2 0 2.500-2.500 2.500-4s-.5-4-2.500-4H17v3c0 1.500-1.200 2.500-2.500 2.500h-5C8.300 13 7 14 7 15.500V19c0 1.500 1.500 3 5.500 3z" fill="#f5cf3f"/><circle cx="15" cy="19.200" r="1" fill="#fff"/><path d="M15 17l7 2.500-7 2.500" stroke="#222" stroke-width="1.300" fill="none"/></g><g transform="translate(1128.5 96.0) scale(0.958)"><path d="M3 4l13-2 2 1v19l-13-1z" fill="#2b2f3a"/><path d="M16 2l5 2v15l-3 3z" fill="#3a8fdd"/><path d="M15 6l-8 6.500 8 6v-3l-4-3 4-3.500zM6 9l2 1.500L6 12zM6 13l2 1.500-2 2z" fill="#2d8de0"/></g><g transform="translate(1172.5 96.0) scale(0.958)"><ellipse cx="13" cy="21.500" rx="8" ry="1.500" fill="#999" opacity=".5"/><path d="M12 3a8.500 8.500 0 1 1-6 14.500l2.800-2.800A4.500 4.500 0 1 0 12 7v3L5 6l7-5z" fill="#6a9fe0" stroke="#3b78c4" stroke-width=".8"/><path d="M12 3a8.500 8.500 0 0 1 8.500 8.500h-4A4.500 4.500 0 0 0 12 7z" fill="#9cc0ee"/></g><g transform="translate(1216.5 96.0) scale(0.958)"><path d="M2 21V14l7-6 5 4 8 6v3z" fill="#1ee61e" stroke="#111" stroke-width="1.500" stroke-linejoin="round"/><g stroke="#e8c81a" stroke-width="1.500"><path d="M19 1v7M15.500 4.500h7M16.500 2l5 5M21.500 2l-5 5"/></g><circle cx="19" cy="4.500" r="2.200" fill="#f3d21f"/></g><g transform="translate(1246.5 96.0) scale(0.958)"><circle cx="12" cy="12" r="9.500" fill="#3f4a46" stroke="#6a6a3a" stroke-width="1"/><path d="M12 20c-1-4 1-6 0-9m0 0c2-1 3-3 3-5m-3 5c-2-1-3-2-4-4m5 8c2 0 3-1 4-2" stroke="#6fa84a" stroke-width="1" fill="none"/></g><g transform="translate(1293.5 96.0) scale(0.958)"><rect x="3" y="2" width="18" height="20" fill="#6e9bd0" stroke="#223"/><rect x="3" y="2" width="5" height="20" fill="#2a3a4f"/><text x="11" y="17" font-size="13" font-weight="700" font-family="Liberation Serif" fill="#fff">?</text></g><path d="M355.5 105.0h9l-4.5 5z" fill="#bbb"/><path d="M429.5 105.0h9l-4.5 5z" fill="#bbb"/><path d="M1157.5 105.0h9l-4.5 5z" fill="#555"/><path d="M1201.5 105.0h9l-4.5 5z" fill="#555"/><g transform="translate(19.5 132.5) scale(0.958)"><path d="M-1 6.500l3-3.500 2.600 2.200L1.600 8.700zM3.600 2.200l2.200-1.700 2.600 2.200-1.700 2.200zM5 9l3-2.200 1 3z" fill="#1c4c9c"/><rect x="6" y="9" width="16" height="14" fill="#fff" stroke="#333" stroke-width="1.100"/><path d="M6 9l8 6 8-6" fill="none" stroke="#333" stroke-width="1"/></g><g transform="translate(63.5 132.5) scale(0.958)"><path d="M-1 6.500l3-3.500 2.600 2.200L1.600 8.700zM3.600 2.200l2.200-1.700 2.600 2.200-1.700 2.200zM5 9l3-2.200 1 3z" fill="#1c4c9c"/><rect x="7" y="9" width="14.500" height="14" fill="#fff" stroke="#222" stroke-width="1.100"/><path d="M7 9l14.500 14M21.500 9L7 23" stroke="#222" stroke-width="1.100"/><circle cx="7" cy="23" r="1.100"/><circle cx="21.500" cy="23" r="1.100"/><circle cx="21.500" cy="9" r="1.100"/></g><g transform="translate(107.5 132.5) scale(0.958)"><path d="M-1 6.500l3-3.500 2.600 2.200L1.600 8.700zM3.600 2.200l2.200-1.700 2.600 2.200-1.700 2.200zM5 9l3-2.200 1 3z" fill="#1c4c9c"/><path d="M7 10v13h14.500v-6" fill="none" stroke="#222" stroke-width="1.100"/><path d="M11 19l10-10" stroke="#111" stroke-width="1.300" fill="none"/><path d="M16 8.500h6v6z" fill="#111"/></g><g transform="translate(151.5 132.5) scale(0.958)"><path d="M-1 6.500l3-3.500 2.600 2.200L1.600 8.700zM3.600 2.200l2.200-1.700 2.600 2.200-1.700 2.200zM5 9l3-2.200 1 3z" fill="#1c4c9c"/><path d="M7 23L21.500 9v14z" fill="#e07a1a"/><path d="M7 23l9-9 5.500 5v4z" fill="#f1d21a"/><path d="M7 23l4-4 6 4z" fill="#2a8a2a"/><rect x="7" y="9" width="14.500" height="14" fill="none" stroke="#222" stroke-width="1.100"/><path d="M7 9l14.500 14" stroke="#222" stroke-width="1"/></g><g transform="translate(195.5 132.5) scale(0.958)"><path d="M-1 6.500l3-3.500 2.600 2.200L1.600 8.700zM3.600 2.200l2.200-1.700 2.600 2.200-1.700 2.200zM5 9l3-2.200 1 3z" fill="#1c4c9c"/><rect x="6" y="10" width="16" height="13" fill="#fff" stroke="#111" stroke-width="1.300"/><path d="M8.500 10v13M19.500 10v13" stroke="#111" stroke-width="2.600" stroke-dasharray="2 1.600"/><path d="M6 16.500h16" stroke="#111" stroke-width="1.100"/></g><g transform="translate(224.5 132.5) scale(0.958)"><path d="M-1 6.500l3-3.500 2.600 2.200L1.600 8.700zM3.600 2.200l2.200-1.700 2.600 2.200-1.700 2.200zM5 9l3-2.200 1 3z" fill="#1c4c9c"/><rect x="7" y="10" width="15" height="13" fill="#fff" stroke="#222" stroke-width="1.100"/><path d="M8 16c2 3 4 3.500 6.500 3s4.500-1 6.500-3v6H8z" fill="#7ad0f0"/><path d="M8 16c2 3 4 3.500 6.500 3s4.500-1 6.500-3" stroke="#2a5a9a" fill="none"/></g><g transform="translate(253.5 132.5) scale(0.958)"><path d="M-1 6.500l3-3.500 2.600 2.200L1.600 8.700zM3.600 2.200l2.200-1.700 2.600 2.200-1.700 2.200zM5 9l3-2.200 1 3z" fill="#1c4c9c"/><rect x="7" y="10" width="15" height="13" fill="#fff" stroke="#222" stroke-width="1.100"/><path d="M9.500 16a5 5 0 0 1 9-2.500l1.500-1.500v5h-5l1.600-1.600a2.800 2.800 0 0 0-4.600 0.600z" fill="#111"/><path d="M19.500 17.500a5 5 0 0 1-9 2.500L9 21.500v-5h5l-1.600 1.600a2.800 2.800 0 0 0 4.600-0.600z" fill="#111"/></g><path d="M46.5 142.0h9l-4.5 5z" fill="#555"/><path d="M90.5 142.0h9l-4.5 5z" fill="#555"/><path d="M134.5 142.0h9l-4.5 5z" fill="#555"/><path d="M178.5 142.0h9l-4.5 5z" fill="#555"/><path d="M281.5 142.0h9l-4.5 5z" fill="#555"/><rect x="295.5" y="133.5" width="211" height="21" rx="1.5" fill="#fff" stroke="#b4b4b4"/><path d="M488.5 142.0h9l-4.5 5z" fill="#444"/><path d="M11 169.5h14M11 171.5h14" stroke="#c8c8c8" stroke-dasharray="1 2"/><g transform="translate(6.8 179.1) scale(0.958)"><path d="M4 4l6 14 7-14" fill="none" stroke="#355" stroke-width="1.300"/><circle cx="4" cy="4" r="1.800" fill="#fff" stroke="#355"/><circle cx="10" cy="18" r="1.800" fill="#fff" stroke="#355"/><circle cx="17" cy="4" r="1.800" fill="#fff" stroke="#355"/><circle cx="12" cy="4" r="1.400" fill="#fff" stroke="#355"/><rect x="14" y="14" width="10" height="10" rx="2" fill="#5a9a5a"/><path d="M19 16v6M16 19h6" stroke="#fff" stroke-width="2"/></g><g transform="translate(6.8 207.7) scale(0.958)"><rect x="3" y="3" width="15" height="15" fill="#6d97c4"/><path d="M3 3h5v5H3zM13 3h5v5h-5zM8 8h5v5H8zM3 13h5v5H3z" fill="#1d3557"/><path d="M13 13h5v5h-5z" fill="#a9c3df"/><rect x="14" y="14" width="10" height="10" rx="2" fill="#5a9a5a"/><path d="M19 16v6M16 19h6" stroke="#fff" stroke-width="2"/></g><g transform="translate(6.8 236.3) scale(0.958)"><rect x="2" y="3" width="17" height="17" fill="#6d97c4" stroke="#3b5f8a"/><path d="M2 3l9 9M11 3L2 12M11 3v17M11 12l8-9M2 12h17M2 16h17M6.500 12v8M15 12v8" stroke="#3b5f8a" stroke-width="1"/><rect x="14" y="14" width="10" height="10" rx="2" fill="#5a9a5a"/><path d="M19 16v6M16 19h6" stroke="#fff" stroke-width="2"/></g><g transform="translate(6.8 265.0) scale(0.958)"><path d="M6 3c5-1 9 2 9 6 0 5-4 9-9 11 3-3 5-6 5-9-2 1-6 0-7-3s0-4 2-5z" fill="#6d97c4" stroke="#3b5f8a" stroke-width=".8"/><rect x="14" y="14" width="10" height="10" rx="2" fill="#5a9a5a"/><path d="M19 16v6M16 19h6" stroke="#fff" stroke-width="2"/></g><g transform="translate(6.8 293.6) scale(0.958)"><path d="M2 22C5 12 11 4 21 2c0 6-4 10-9 12-4 1.500-7 3-9 6z" fill="#6d97c4" stroke="#3b5f8a"/><path d="M2 22C8 14 13 8 20 3" stroke="#3b5f8a" fill="none"/><rect x="14" y="14" width="10" height="10" rx="2" fill="#5a9a5a"/><path d="M19 16v6M16 19h6" stroke="#fff" stroke-width="2"/></g><g transform="translate(6.8 322.2) scale(0.958)"><rect x="2" y="2" width="18" height="18" rx="2" fill="#a9c3df" stroke="#6d97c4"/><path d="M5 4l5 13 7-13" fill="none" stroke="#355" stroke-width="1.200"/><circle cx="5" cy="4" r="1.500" fill="#fff" stroke="#355"/><circle cx="10" cy="17" r="1.500" fill="#fff" stroke="#355"/><circle cx="17" cy="4" r="1.500" fill="#fff" stroke="#355"/><rect x="14" y="14" width="10" height="10" rx="2" fill="#5a9a5a"/><path d="M19 16v6M16 19h6" stroke="#fff" stroke-width="2"/></g><g transform="translate(6.8 350.8) scale(0.958)"><path d="M4 10c-2-5 2-8 6-8 3 0 4 1 5 2 3 0 5 3 4 7-1 3-3 4-4 4l-1 5c-3 1-5-1-5-3l-1-4c-2 0-3-1-4-3z" fill="#3a6aa0" stroke="#1d3557"/><path d="M11 4c-1 3-1 7 0 11" stroke="#dbe7f5" fill="none"/><circle cx="8" cy="7" r="1" fill="#fff"/><rect x="14" y="14" width="10" height="10" rx="2" fill="#5a9a5a"/><path d="M19 16v6M16 19h6" stroke="#fff" stroke-width="2"/></g><g transform="translate(6.8 379.4) scale(0.958)"><circle cx="11" cy="11" r="9.500" fill="#8ab0e0" stroke="#2a5a9a" stroke-width="1.200"/><ellipse cx="11" cy="11" rx="4.500" ry="9.500" fill="none" stroke="#dbe7f5" stroke-width=".9"/><path d="M1.500 11h19M3 6h16M3 16h16M11 1.500v19" stroke="#dbe7f5" stroke-width=".9"/><path d="M5 6l3-1 2 2-1 3-3 1zM13 5l4 1 1 4-3 2-2-3zM8 13l3 1v3l-2 2-2-3z" fill="#777" opacity=".75"/><rect x="14" y="14" width="10" height="10" rx="2" fill="#5a9a5a"/><path d="M19 16v6M16 19h6" stroke="#fff" stroke-width="2"/></g><g transform="translate(6.8 408.1) scale(0.958)"><circle cx="11" cy="11" r="9.500" fill="#1d3557" stroke="#12233a"/><ellipse cx="11" cy="11" rx="4.500" ry="9.500" fill="none" stroke="#dbe7f5" stroke-width="1.300"/><path d="M1.500 11h19M3 6h16M3 16h16" stroke="#dbe7f5" stroke-width="1.300"/><path d="M5 7h12v3H5zM4 12.500h14v3H4z" fill="#6d97c4" opacity=".7"/><rect x="14" y="14" width="10" height="10" rx="2" fill="#5a9a5a"/><path d="M19 16v6M16 19h6" stroke="#fff" stroke-width="2"/></g><g transform="translate(6.8 436.7) scale(0.958)"><circle cx="11" cy="11" r="9.500" fill="#f4f8fc" stroke="#6d97c4" stroke-width="1.200"/><ellipse cx="11" cy="11" rx="4.500" ry="9.500" fill="none" stroke="#9fc0e6" stroke-width=".9"/><path d="M1.500 11h19M3 6h16M3 16h16M2.500 8.500h17M2.500 13.500h17" stroke="#9fc0e6" stroke-width=".9"/><path d="M5 5l5 12 7-12" fill="none" stroke="#355" stroke-width="1.200"/><circle cx="5" cy="5" r="1.500" fill="#fff" stroke="#355"/><circle cx="10" cy="17" r="1.500" fill="#fff" stroke="#355"/><circle cx="17" cy="5" r="1.500" fill="#fff" stroke="#355"/><rect x="14" y="14" width="10" height="10" rx="2" fill="#5a9a5a"/><path d="M19 16v6M16 19h6" stroke="#fff" stroke-width="2"/></g><g transform="translate(6.8 465.3) scale(0.958)"><path d="M4 4l6 14 7-14" fill="none" stroke="#355" stroke-width="1.300"/><circle cx="4" cy="4" r="1.800" fill="#fff" stroke="#355"/><circle cx="10" cy="18" r="1.800" fill="#fff" stroke="#355"/><circle cx="17" cy="4" r="1.800" fill="#fff" stroke="#355"/><circle cx="12" cy="4" r="1.400" fill="#fff" stroke="#355"/><rect x="14" y="14" width="10" height="10" rx="1.5" fill="#dcae1f"/><path d="M19 15.5v7M15.5 19h7M16.5 16.5l5 5M21.5 16.5l-5 5" stroke="#fff" stroke-width="1.3"/></g><path d="M35.5 359.5h9l-4.5 5z" fill="#555"/><path d="M35.5 474.0h9l-4.5 5z" fill="#555"/><rect x="56.5" y="184.5" width="22" height="22" rx="2" fill="#dcdcdc" stroke="#b8b8b8"/><g transform="translate(58.0 186.0) scale(0.792)"><path d="M4 14l8-4 3 6-8 5z" fill="#e33"/><path d="M4 14l8-4-1-3-8 3z" fill="#3a8ad0"/><path d="M7 21l8-5 2 1-8 5z" fill="#f1d21a"/><path d="M11 13l9-10 2 2-8 11z" fill="#e0a050" stroke="#a66a20" stroke-width=".8"/><path d="M10 13l4 3-2 2-4-1z" fill="#c98a3a"/></g><g transform="translate(82.5 186.0) scale(0.792)"><rect x="3" y="9" width="12" height="12" fill="#fff" stroke="#888"/><rect x="7" y="5" width="12" height="12" fill="#fff" stroke="#888"/><path d="M12 3v10a2 2 0 0 0 4 0V5" fill="none" stroke="#777" stroke-width="1.300"/><rect x="14" y="14" width="10" height="10" rx="2" fill="#5a9a5a"/><path d="M19 16v6M16 19h6" stroke="#fff" stroke-width="2"/></g><g transform="translate(106.0 186.0) scale(0.792)"><path d="M2 12c4-6 14-6 18 0-4 6-14 6-18 0z" fill="#fff" stroke="#666" stroke-width="1.300"/><circle cx="11" cy="12" r="4" fill="#6d97c4" stroke="#3b5f8a"/><circle cx="11" cy="12" r="1.600" fill="#123"/><path d="M12 15.500h11l-5.500 6.500z" fill="#444"/></g><g transform="translate(129.5 186.0) scale(0.792)"><path d="M2 3h18l-7 8v9l-4-2v-7z" fill="#6d97c4" stroke="#3b5f8a"/><rect x="2" y="2" width="18" height="3" fill="#f1d21a" stroke="#c9a21b" stroke-width=".7"/><path d="M12 15.500h11l-5.500 6.500z" fill="#444"/></g><g transform="translate(151.5 186.0) scale(0.792)"><text x="0" y="16" font-size="24" font-family="Liberation Serif" fill="#5a1a8a">ε</text><path d="M12 21v-6h8v6" fill="none" stroke="#888" stroke-width="1.800"/><rect x="13.500" y="17" width="5" height="4" fill="#ccc"/></g><g transform="translate(191.0 186.0) scale(0.792)"><path d="M4 3v18" stroke="#999" stroke-dasharray="1.500 1.500"/><rect x="5" y="4" width="4" height="4" fill="#f1d21a" stroke="#c9a21b" stroke-width=".7"/><rect x="5" y="15" width="4" height="4" fill="#f1d21a" stroke="#c9a21b" stroke-width=".7"/><path d="M13 2h5v11h4l-6.500 9L9 13h4z" fill="#6d97c4" stroke="#3b5f8a" stroke-width=".9"/></g><g transform="translate(214.5 186.0) scale(0.792)"><path d="M4 3v18" stroke="#999" stroke-dasharray="1.500 1.500"/><rect x="5" y="9" width="4" height="4" fill="#f1d21a" stroke="#c9a21b" stroke-width=".7"/><rect x="5" y="15" width="4" height="4" fill="#f1d21a" stroke="#c9a21b" stroke-width=".7"/><path d="M13 22h5V11h4l-6.500-9L9 11h4z" fill="#6d97c4" stroke="#3b5f8a" stroke-width=".9"/></g><g transform="translate(238.0 186.0) scale(0.792)"><rect x="3" y="3" width="15" height="15" rx="1.500" fill="#f4f4f4" stroke="#999" stroke-width="1.300"/><rect x="13" y="15" width="9" height="6" rx="2" fill="#e33"/><path d="M15 18h5" stroke="#fff" stroke-width="1.600"/></g><path d="M176.0 193.0h9l-4.5 5z" fill="#555"/><rect x="503.5" y="167.500" width="8" height="8" rx="1.500" fill="#eee" stroke="#999"/><path d="M505.500 172.500h3v-3" stroke="#777" fill="none"/><rect x="514.5" y="167.500" width="8" height="8" rx="1.500" fill="#eee" stroke="#999"/><path d="M516.500 169.500l4 4M520.500 169.500l-4 4" stroke="#333" stroke-width="1.300"/>
<rect x="52.5" y="211" width="470.500" height="22.800" fill="url(#selg)"/><rect x="80.5" y="214.9" width="16" height="16" fill="#fff" stroke="#fff"/><rect x="101.500" y="212.9" width="18.500" height="19" fill="#0a78d8" stroke="#234a7a" stroke-width="1"/><rect x="80.5" y="237.7" width="16" height="16" fill="#fff" stroke="#d9d9d9"/><path d="M83.5 245.7l3.3 4.2 6-9.5" fill="none" stroke="#111" stroke-width="2.3"/><rect x="80.5" y="260.5" width="16" height="16" fill="#fff" stroke="#d9d9d9"/><path d="M83.5 268.5l3.3 4.2 6-9.5" fill="none" stroke="#111" stroke-width="2.3"/><rect x="80.5" y="283.3" width="16" height="16" fill="#fff" stroke="#d9d9d9"/><path d="M83.5 291.3l3.3 4.2 6-9.5" fill="none" stroke="#111" stroke-width="2.3"/><rect x="101.500" y="235.7" width="18.500" height="19" fill="#fff" stroke="#333"/><path d="M101 268.0h19" stroke="#9a3ae0" stroke-width="1.300"/><rect x="101.500" y="281.3" width="18.500" height="19" fill="#fff" stroke="#4a4ae0"/><rect x="80.5" y="306.1" width="16" height="16" fill="#fff" stroke="#d9d9d9"/><path d="M83.5 314.1l3.3 4.2 6-9.5" fill="none" stroke="#111" stroke-width="2.3"/><g transform="translate(102 302.6)"><rect x="1.500" y="8" width="10" height="11" fill="#fff" stroke="#999"/><rect x="5" y="5" width="11" height="12" fill="#fff" stroke="#888"/><path d="M8.500 3.500v8a2 2 0 0 0 4 0V5.500a1.500 1.500 0 0 0-3 0v5" fill="none" stroke="#777" stroke-width="1.100"/><path d="M0 15v5h5" fill="none" stroke="#aaa"/></g><rect x="80.5" y="374.4" width="16" height="16" fill="#fff" stroke="#d9d9d9"/><path d="M83.5 382.4l3.3 4.2 6-9.5" fill="none" stroke="#111" stroke-width="2.3"/><g transform="translate(102 370.9)"><rect x="1.500" y="8" width="10" height="11" fill="#fff" stroke="#999"/><rect x="5" y="5" width="11" height="12" fill="#fff" stroke="#888"/><path d="M8.500 3.500v8a2 2 0 0 0 4 0V5.500a1.500 1.500 0 0 0-3 0v5" fill="none" stroke="#777" stroke-width="1.100"/><path d="M0 15v5h5" fill="none" stroke="#aaa"/></g><rect x="80.5" y="397.2" width="16" height="16" fill="#fff" stroke="#d9d9d9"/><path d="M83.5 405.2l3.3 4.2 6-9.5" fill="none" stroke="#111" stroke-width="2.3"/><g transform="translate(102 393.7)"><rect x="1.500" y="8" width="10" height="11" fill="#fff" stroke="#999"/><rect x="5" y="5" width="11" height="12" fill="#fff" stroke="#888"/><path d="M8.500 3.500v8a2 2 0 0 0 4 0V5.500a1.500 1.500 0 0 0-3 0v5" fill="none" stroke="#777" stroke-width="1.100"/><path d="M0 15v5h5" fill="none" stroke="#aaa"/></g><rect x="80.5" y="420.0" width="16" height="16" fill="#fff" stroke="#d9d9d9"/><path d="M83.5 428.0l3.3 4.2 6-9.5" fill="none" stroke="#111" stroke-width="2.3"/><g transform="translate(102 416.5)"><rect x="1.500" y="8" width="10" height="11" fill="#fff" stroke="#999"/><rect x="5" y="5" width="11" height="12" fill="#fff" stroke="#888"/><path d="M8.500 3.500v8a2 2 0 0 0 4 0V5.500a1.500 1.500 0 0 0-3 0v5" fill="none" stroke="#777" stroke-width="1.100"/><path d="M0 15v5h5" fill="none" stroke="#aaa"/></g><path d="M60 311.1h10l-5 5z" fill="#666"/><path d="M60 425.0h10l-5 5z" fill="#666"/><path d="M85 447.8h10l-5 5z" fill="#666"/><rect x="105.5" y="328.9" width="16" height="16" fill="#fff" stroke="#d9d9d9"/><path d="M108.5 336.9l3.3 4.2 6-9.5" fill="none" stroke="#111" stroke-width="2.3"/><rect x="126.500" y="327.4" width="18" height="18.500" fill="#fff" stroke="#3a8a3a"/><rect x="105.5" y="351.6" width="16" height="16" fill="#fff" stroke="#d9d9d9"/><rect x="126" y="349.6" width="19" height="19" fill="#5a0ab0" stroke="#3a0a70"/><rect x="105.5" y="442.8" width="16" height="16" fill="#fff" stroke="#d9d9d9"/><path d="M108.5 450.8l3.3 4.2 6-9.5" fill="none" stroke="#111" stroke-width="2.3"/><g transform="translate(126 439.3)"><path d="M1 7c3-3 6-3 9-1s6 1 9-1v9c-3 2-6 2-9 0s-6-1-9 1z" fill="#d8d8d8" stroke="#888" stroke-width="1"/></g><rect x="130.0" y="465.6" width="16" height="16" fill="#fff" stroke="#d9d9d9"/><path d="M133.0 473.6l3.3 4.2 6-9.5" fill="none" stroke="#111" stroke-width="2.3"/><rect x="151" y="464.1" width="17.500" height="18" fill="#0000ff"/><rect x="130.0" y="488.4" width="16" height="16" fill="#fff" stroke="#d9d9d9"/><path d="M133.0 496.4l3.3 4.2 6-9.5" fill="none" stroke="#111" stroke-width="2.3"/><rect x="151" y="486.9" width="17.500" height="18" fill="#03033c"/><rect x="130.0" y="511.2" width="16" height="16" fill="#fff" stroke="#d9d9d9"/><path d="M133.0 519.2l3.3 4.2 6-9.5" fill="none" stroke="#111" stroke-width="2.3"/><rect x="151" y="509.7" width="17.500" height="18" fill="#0ccfe6"/><rect x="130.0" y="534.0" width="16" height="16" fill="#fff" stroke="#d9d9d9"/><path d="M133.0 542.0l3.3 4.2 6-9.5" fill="none" stroke="#111" stroke-width="2.3"/><rect x="151" y="532.5" width="17.500" height="18" fill="#086e28"/><rect x="130.0" y="556.8" width="16" height="16" fill="#fff" stroke="#d9d9d9"/><path d="M133.0 564.8l3.3 4.2 6-9.5" fill="none" stroke="#111" stroke-width="2.3"/><rect x="151" y="555.2" width="17.500" height="18" fill="#eccb08"/><rect x="130.0" y="579.5" width="16" height="16" fill="#fff" stroke="#d9d9d9"/><path d="M133.0 587.5l3.3 4.2 6-9.5" fill="none" stroke="#111" stroke-width="2.3"/><rect x="151" y="578.0" width="17.500" height="18" fill="#d4740a"/><rect x="130.0" y="602.3" width="16" height="16" fill="#fff" stroke="#d9d9d9"/><path d="M133.0 610.3l3.3 4.2 6-9.5" fill="none" stroke="#111" stroke-width="2.3"/><rect x="151" y="600.8" width="17.500" height="18" fill="#7a1c00"/><rect x="130.0" y="625.1" width="16" height="16" fill="#fff" stroke="#d9d9d9"/><path d="M133.0 633.1l3.3 4.2 6-9.5" fill="none" stroke="#111" stroke-width="2.3"/><rect x="151" y="623.6" width="17.500" height="18" fill="#ff0a0a"/><rect x="80.5" y="647.9" width="16" height="16" fill="#fff" stroke="#d9d9d9"/><path d="M83.5 655.9l3.3 4.2 6-9.5" fill="none" stroke="#111" stroke-width="2.3"/><g transform="translate(103 646.4)"><rect x="1" y="1" width="16" height="16" fill="#8ea9c9"/><path d="M1 1h5v5H1zM11 1h6v5h-6zM6 6h5v5H6zM1 11h5v6H1z" fill="#1d3557"/><path d="M11 11h6v6h-6z" fill="#c3d3e6"/></g>
<polygon points="1068,249 1180,246 1280,243.6 1394,240.4 1448,240.4 1460,244 1467,252 1471,266 1501,520 1535,810 1568,1100 1568,1150 1556,1196 1520,1290 1454,1394 1426,1437 1413,1438.5 1300,1376.7 1200,1321.7 1058,1243 1016,1198 988,1134 990,1100 996,810 999,632 1001,520 1004,422 1008,313" fill="#b9b9b9"/>
<g clip-path="url(#dem)"><g filter="url(#b2)">
<polygon points="1068,249 1448,240 1467,252 1472,290 1440,300 1380,282 1320,296 1300,268 1240,300 1180,302 1128,262" fill="#fff" opacity=".12"/>
<polygon points="1180,245 1320,243 1308,272 1240,300 1180,292" fill="#fff" opacity=".14"/>
<polygon points="1195,256 1235,258 1268,308 1248,304" fill="#fff" opacity=".2"/>
<polygon points="1058,276 1086,260 1102,268 1070,294" fill="#fff" opacity=".18"/>
<polygon points="1274,383 1334,363 1334,387 1292,393" fill="#fff" opacity=".32"/>
<polygon points="1288,351 1324,331 1324,347 1300,363" fill="#000" opacity=".09"/>
<polygon points="1254,331 1286,321 1288,329 1256,343" fill="#000" opacity=".08"/>
<polygon points="1140,270 1190,262 1230,300 1200,318" fill="#000" opacity=".04"/>
<polygon points="1406,275 1426,273 1428,301 1408,305" fill="#000" opacity=".05"/>
<polygon points="1454,1305 1545,1100 1568,1100 1568,1150 1556,1196 1520,1290 1454,1394 1426,1437 1412,1436 1390,1402" fill="#fff" opacity=".15"/>
<polygon points="1113,1232 1147,1222 1174,1262 1160,1292 1118,1264" fill="#000" opacity=".025"/>
<polygon points="1400,268 1452,262 1462,470 1436,480 1410,380" fill="#fff" opacity=".07"/>
</g>
<g filter="url(#b1)">
<polygon points="1276,351 1292,347 1284,363" fill="#fff" opacity=".5"/>
<polygon points="1298,327 1316,326 1308,335" fill="#fff" opacity=".5"/>
<polygon points="1222,342 1244,332 1250,338 1228,350" fill="#fff" opacity=".35"/>
<polygon points="1112,598 1134,540 1137,574" fill="#666" opacity=".45"/>
<polygon points="1552,1120 1565,1108 1566,1152 1534,1216 1520,1216" fill="#fff" opacity=".4"/>
<polygon points="1530,1215 1538,1224 1490,1310 1481,1302" fill="#fff" opacity=".42"/>
<polygon points="1481,1302 1493,1309 1446,1396 1427,1426 1418,1418 1455,1342" fill="#fff" opacity=".42"/>
<polygon points="1444,283 1452,282 1450,291 1445,290" fill="#fff" opacity=".8"/>
<polygon points="1458,705 1463,700 1468,790 1463,796" fill="#fff" opacity=".16"/>
<polygon points="1444,522 1450,522 1464,598 1460,602" fill="#fff" opacity=".14"/>
<path d="M1044 273L1024 296" stroke="#222" stroke-width="2.2" opacity=".7"/>
<path d="M1019 338L1031 362" stroke="#666" stroke-width="1.300" opacity=".55"/>
<path d="M1254 354L1258 376" stroke="#444" stroke-width="2.600" opacity=".6"/>
<path d="M1338 383L1324 421" stroke="#777" stroke-width="3.500" opacity=".45"/>
<path d="M1345 371L1352 366" stroke="#666" stroke-width="2" opacity=".5"/>
<path d="M1446 251L1448 285" stroke="#fff" stroke-width="1.500" opacity="0.28"/>
<path d="M1466 271L1448 379" stroke="#fff" stroke-width="1.600" opacity="0.31"/>
<path d="M1463 275L1446 377" stroke="#888" stroke-width="1" opacity=".4"/>
<path d="M1460 375L1462 481" stroke="#fff" stroke-width="1.600" opacity="0.31"/>
<path d="M1394 313L1410 301" stroke="#fff" stroke-width="1.500" opacity="0.31"/>
<path d="M1406 323L1400 371" stroke="#fff" stroke-width="1.200" opacity="0.25"/>
<path d="M1420 331L1416 365" stroke="#fff" stroke-width="1.500" opacity="0.25"/>
<path d="M1432 315L1436 365" stroke="#fff" stroke-width="1.500" opacity="0.25"/>
<path d="M1429 316L1433 364" stroke="#888" stroke-width="1" opacity=".35"/>
<path d="M1436 389L1438 455" stroke="#fff" stroke-width="1.200" opacity="0.25"/>
<path d="M1448 407L1460 419M1446 455L1460 447M1449 429L1459 424" stroke="#fff" stroke-width="1.500" opacity="0.31"/>
<path d="M1447 409L1459 421M1445 457L1459 449" stroke="#777" stroke-width="1" opacity=".4"/>
<path d="M1292 243L1400 247M1200 252L1290 258" stroke="#fff" stroke-width="1.500" opacity="0.19"/>
<path d="M1030 1070L1120 966" stroke="#fff" stroke-width="3" opacity="0.19"/>
<path d="M1500 1303L1528 1240" stroke="#333" stroke-width="1.500" opacity=".6"/>
<path d="M1551 1194L1528 1240" stroke="#555" stroke-width="1.500" opacity=".5"/>
<path d="M1560 1150L1548 1190" stroke="#777" stroke-width="1.500" opacity=".5"/>
<path d="M1470 1330L1440 1385" stroke="#777" stroke-width="1.300" opacity=".5"/>
<path d="M1113 1290L1128 1262" stroke="#666" stroke-width="1.200" opacity=".5"/>
</g>
<g filter="url(#b0)">
<polygon points="1028,384 1033,384 1042,480 1038,480" fill="#fff" opacity=".22"/>
<polygon points="1043,400 1049,400 1062,564 1055,564" fill="#fff" opacity=".26"/>
<polygon points="1056,415 1062,420 1098,564 1091,564" fill="#fff" opacity=".16"/>
<polygon points="1053.700,560 1070,560 1080,672.500 1083.700,744 1080,744 1067.500,647.500" fill="#fff" opacity=".2"/>
<polygon points="1080,744 1084,744 1100,900 1096,900" fill="#fff" opacity=".16"/>
<polygon points="1110,597.500 1125,646 1116,744 1090,744 1107.500,647.500" fill="#000" opacity=".055"/>
<polygon points="1092,744 1116,744 1111,800 1074,800" fill="#000" opacity=".05"/>
<polygon points="1074,800 1111,800 1030,1069" fill="#000" opacity=".06"/>
<polygon points="1084,800 1102,800 1034,1060" fill="#000" opacity=".035"/>
<polygon points="1121,614 1158,612 1156,625 1122,627" fill="#fff" opacity=".12"/>
<polygon points="1016,320 1034,318 1040,380 1024,372" fill="#fff" opacity=".08"/>
</g>
</g>
<polygon points="1124,274 1423.6,485.6 1470,603 1455.6,724 1471,826 1543.6,1054 1445,1286 1372.5,1369.5 1065.6,1150 1116.6,1030 1138,812 1163,639 1118,485 1027.6,373.4" fill="#7a1d01"/>
<g clip-path="url(#mesh)">
<polygon points="1120,491.9 1127.5,488.5 1125,494.4" fill="#d47508"/>
<polygon points="1127.5,488.5 1133.8,491.2 1140,496.9 1137.5,503.8 1131.2,498.8" fill="#d47508"/>
<polygon points="1130.6,504.4 1137.5,503.8 1134.4,510" fill="#d47508"/>
<polygon points="1140,496.9 1147.5,498.8 1156.2,500 1165,504.4 1175,503.8 1181.2,506.2 1190,511.2 1198.8,516.2 1203.8,513.1 1205.6,518.8 1212.5,519.4 1218.8,515.6 1222.5,522.5 1230,520 1236.2,525 1243.8,525.6 1251.2,528.1 1256.2,526.9 1261.2,531.2 1267.5,528.8 1272.5,533.1 1277.5,531.9 1283.8,538.1 1288.8,537.5 1295,538.8 1301,537.5 1301,655 1261.2,655 1253.8,655 1252.5,645 1247.5,636.2 1243.8,628.8 1243.8,620 1241.2,613.8 1237.5,605 1243.8,597.5 1242.5,590 1243.1,582.5 1237.5,578.8 1230,580 1228.8,575 1233.8,570 1228.8,567.5 1227.5,560 1225,555 1220,560 1213.8,563.1 1208.8,560 1202.5,551.2 1197.5,545 1187.5,537.5 1181.2,540.6 1180,536.2 1172.5,539.4 1166.2,532.5 1161.9,525 1155,516.2 1150,515 1147.5,507.5 1142.5,501.2" fill="#d47508"/>
<polygon points="1162.5,633.1 1169.4,634.4 1165,638.8" fill="#d47508"/>
<polygon points="1168.1,647.5 1173.8,646.9 1171.2,653.1" fill="#d47508"/>
<polygon points="1223.1,591.9 1230,593.1 1226.2,595.6" fill="#d47508"/>
<polygon points="1248.8,612.5 1256.2,611.2 1262.5,613.8 1261.2,620 1263.8,623.8 1258.8,627.5 1260,638.8 1256.2,645 1261.2,647.5 1260,655 1253.8,655 1253.8,645 1252.5,637.5 1247.5,631.2 1243.8,628.1 1245,625 1248.8,620" fill="#7a1d01"/>
<polygon points="1263.8,586.9 1268.1,590 1264.4,593.1" fill="#7a1d01"/>
<polygon points="1265.6,635 1270.6,631.9 1271.9,638.1" fill="#7a1d01"/>
<polygon points="1293.1,621.2 1301,617.5 1301,628.8 1296.2,627.5" fill="#7a1d01"/>
<polygon points="1140,496.9 1147.5,498.8 1143.8,502.5" fill="#e9ca0b"/>
<polygon points="1147.5,499.4 1156.2,500.6 1153.8,506.2 1150,503.8" fill="#e9ca0b"/>
<polygon points="1165,507.5 1175,503.8 1181.2,506.2 1190,511.2 1198.8,516.2 1203.8,513.1 1205.6,518.8 1212.5,519.4 1218.8,515.6 1222.5,522.5 1230,520 1236.2,525 1243.8,525.6 1251.2,528.1 1256.2,526.9 1261.2,531.2 1267.5,528.8 1272.5,533.1 1277.5,531.9 1283.8,538.1 1288.8,537.5 1295,538.8 1301,537.5 1301,598.8 1286.2,600.6 1280,590 1277.5,586.2 1273.8,582.5 1270,580 1268.8,570 1262.5,565 1257.5,561.2 1248.8,555 1241.2,557.5 1238.8,550 1230,541.2 1226.2,542.5 1227.5,550 1225,551.9 1220,543.8 1215,536.2 1210,530 1205,532.5 1198.8,533.8 1192.5,530 1187.5,528.1 1190,525 1185,520 1176.2,519.4 1175,525 1170,521.9 1163.8,515.6" fill="#e9ca0b"/>
<polygon points="1301,570 1295,573.8 1286.2,573.8 1281.2,579.4 1290,580 1295,586.2 1301,586.9" fill="#d47508"/>
<polygon points="1273.1,608.8 1275.6,603.8 1278.1,608.8 1276.2,613.8" fill="#e9ca0b"/>
<polygon points="1156.2,500 1165,504.4 1168.1,507.5 1163.8,511.9 1160,506.2" fill="#0a6c26"/>
<polygon points="1176.2,508.8 1181.2,506.2 1190,511.2 1198.8,516.2 1203.8,513.1 1205,520 1201.2,525.6 1196.2,521.9 1190,519.4 1185,515.6 1181.2,511.2" fill="#0a6c26"/>
<polygon points="1208.8,520 1212.5,516.9 1215.6,522.5" fill="#0a6c26"/>
<polygon points="1223.1,526.2 1227.5,525 1227.5,530" fill="#0a6c26"/>
<polygon points="1228.8,532.5 1236.2,535 1237.5,537.5 1245,535 1252.5,536.2 1255,540 1261.2,535 1261.2,531.2 1267.5,536.2 1271.2,542.5 1277.5,541.2 1282.5,542.5 1288.8,537.5 1295,538.8 1301,537.5 1301,543.8 1293.1,545 1292.5,550 1287.5,558.1 1283.8,551.2 1277.5,547.5 1272.5,545 1267.5,541.2 1263.8,546.2 1257.5,545 1253.8,542.5 1247.5,546.9 1242.5,543.8 1236.2,537.5 1232.5,536.2" fill="#0a6c26"/>
<polygon points="1223.1,522.5 1230,520 1236.2,525 1243.8,525.6 1251.2,528.1 1256.2,526.9 1261.2,531.2 1258.8,533.8 1255,538.1 1252.5,536.2 1245,535 1237.5,537.5 1235,532.5 1228.8,531.9 1226.2,527.5" fill="#10cde6"/>
<polygon points="1265,533.8 1268.1,528.8 1272.5,533.1 1280,537.5 1287.5,538.1 1288.1,542.5 1282.5,542.5 1277.5,541.2 1273.8,536.2 1268.8,535" fill="#10cde6"/>
<polygon points="1205.6,518.8 1210,516.2 1208.8,521.2" fill="#04043a"/>
<polygon points="1216.9,522.5 1219.4,515.6 1223.1,522.5 1221.9,526.9" fill="#04043a"/>
<polygon points="1232.5,525 1233.1,521.2 1236.9,525 1235,529.4" fill="#04043a"/>
<polygon points="1250.6,528.8 1255.6,526.2 1258.1,530 1256.2,533.8" fill="#04043a"/>
<polygon points="1279.4,537.5 1285,536.9 1282.5,541.9" fill="#04043a"/>
<polygon points="1225,521.2 1230.6,520 1232.5,525 1228.8,524.4" fill="#0808ff"/>
<polygon points="1271.9,534.4 1274.4,531.9 1277.5,535.6" fill="#0808ff"/>
<polygon points="1299,537.5 1305,538.1 1311.2,540 1317.5,541.9 1323.8,543.8 1331.2,550 1336.2,545 1342.5,551.2 1350,553.1 1358.8,551.2 1360,555 1367.5,553.1 1374.4,553.8 1370,560 1375,565 1376.2,570 1382.5,575 1385,582.5 1383.8,590 1391.2,595 1393.1,606.2 1387.5,623.8 1383.8,626.2 1380,620 1372.5,620.6 1376.2,627.5 1368.8,629.4 1365,625 1358.8,619.4 1358.1,612.5 1352.5,616.2 1347.5,608.8 1341.9,611.2 1341.2,602.5 1335.6,606.9 1342.5,613.8 1345,618.8 1355,622.5 1361.2,628.8 1368.8,631.2 1370,636.2 1377.5,641.2 1380,643.8 1376.2,647.5 1381.2,650 1377.5,655 1299,655" fill="#d47508"/>
<polygon points="1299,623.1 1305,624.4 1313.8,631.2 1320,637.5 1323.8,645 1330,643.8 1328.8,648.8 1335,650 1335,655 1325,655 1318.8,647.5 1315,640 1307.5,632.5 1299,630" fill="#7a1d01"/>
<polygon points="1312.5,593.8 1316.2,590 1318.8,593.8 1315,596.2" fill="#7a1d01"/>
<polygon points="1320,593.8 1325,595 1322.5,599.4" fill="#7a1d01"/>
<polygon points="1422.5,536.2 1424.4,529.4 1428.8,536.9" fill="#d47508"/>
<polygon points="1411.9,550 1411.9,543.1 1421.2,550" fill="#d47508"/>
<polygon points="1433.1,549.4 1433.8,542.5 1439.4,547.5" fill="#d47508"/>
<polygon points="1425,581.2 1425.6,575 1428.8,570 1431.2,576.9" fill="#d47508"/>
<polygon points="1432.5,576.2 1438.8,575 1438.8,580" fill="#d47508"/>
<polygon points="1440,581.2 1445.6,575.6 1446.2,583.8" fill="#d47508"/>
<polygon points="1418.1,596.2 1423.8,590 1426.9,596.2 1431.2,600 1433.1,603.8 1437.5,601.2 1440,606.2 1433.1,604.4 1432.5,608.8 1434.4,618.8 1431.2,616.2 1428.8,612.5 1423.8,608.8 1417.5,610 1418.8,602.5" fill="#d47508"/>
<polygon points="1431.2,595 1435,589.4 1437.5,595 1434.4,600.6" fill="#d47508"/>
<polygon points="1415,628.8 1420,631.2 1425,635 1432.5,627.5 1435,618.8 1437.5,626.2 1442.5,631.2 1447.5,630 1452.5,628.1 1455,632.5 1450,637.5 1448.8,655 1425,655 1420,650 1416.2,640" fill="#d47508"/>
<polygon points="1435,643.8 1441.2,646.2 1437.5,650.6" fill="#7a1d01"/>
<polygon points="1442.5,632.5 1448.8,631.2 1449.4,637.5 1445,636.2" fill="#e9ca0b"/>
<polygon points="1441.2,640 1448.1,638.1 1447.5,643.8" fill="#e9ca0b"/>
<polygon points="1445,651.2 1449.4,649.4 1449.4,655 1446.2,655" fill="#e9ca0b"/>
<polygon points="1433.1,610.6 1438.1,611.2 1435.6,618.8" fill="#ff0a0a"/>
<polygon points="1403.8,651.2 1407.5,645.6 1409.4,655 1404.4,655" fill="#ff0a0a"/>
<polygon points="1299,537.5 1305,538.1 1311.2,540 1317.5,541.9 1323.8,543.8 1331.2,550 1330,552.5 1323.8,555 1320,562.5 1316.2,566.2 1318.8,568.8 1312.5,570 1307.5,570 1303.8,576.2 1300,572.5 1299,573.8" fill="#e9ca0b"/>
<polygon points="1299,587.5 1302.5,590 1304.4,596.2 1302.5,600.6 1299,600" fill="#e9ca0b"/>
<polygon points="1305,595 1308.1,590 1311.2,596.2" fill="#e9ca0b"/>
<polygon points="1341.2,551.2 1350,553.1 1358.8,551.2 1360,555 1367.5,553.1 1369.4,557.5 1365,560 1363.8,565 1361.2,568.8 1366.9,573.8 1373.1,577.5 1370,585 1365,580 1358.8,576.2 1352.5,576.2 1347.5,573.8 1353.8,569.4 1357.5,567.5 1356.2,562.5 1350,560 1343.8,557.5" fill="#e9ca0b"/>
<polygon points="1299,541.9 1303.8,545 1308.8,546.9 1316.2,545 1323.8,543.8 1318.8,547.5 1312.5,550.6 1307.5,548.1 1305,551.2 1301.9,547.5 1299,545" fill="#0a6c26"/>
<polygon points="1331.9,550 1336.2,545 1342.5,555.6 1337.5,555" fill="#0a6c26"/>
<polygon points="1302.5,541.2 1305.6,537.5 1308.8,541.2 1312.5,541.2 1316.9,542.5 1313.8,545.6 1307.5,546.2 1303.8,544.4" fill="#10cde6"/>
<polygon points="1175,659 1181.2,662.1 1177.5,665.9" fill="#d47508"/>
<polygon points="1178.1,672.1 1185,669 1191.2,672.8 1187.5,677.1 1181.9,676.5" fill="#d47508"/>
<polygon points="1187.5,677.1 1193.8,677.1 1188.8,682.8" fill="#d47508"/>
<polygon points="1202.5,677.8 1210.6,670.2 1210,678.4" fill="#d47508"/>
<polygon points="1190.6,692.1 1198.8,692.1 1200.6,698.4 1196.9,705.9" fill="#d47508"/>
<polygon points="1200.6,698.4 1204.4,694 1210.6,692.1 1209.4,700.2 1201.9,700.2" fill="#d47508"/>
<polygon points="1188.8,706.5 1204.4,707.1 1200.6,713.4 1192.5,713.4" fill="#d47508"/>
<polygon points="1197.5,720.2 1201.2,714 1209.4,714 1205.6,720.2" fill="#d47508"/>
<polygon points="1205.6,720.9 1211.2,720.9 1208.8,727.1" fill="#d47508"/>
<polygon points="1216.9,689.6 1221.9,692.8 1218.1,696.5" fill="#d47508"/>
<polygon points="1216.9,697.1 1223.1,700.2 1221.9,707.8 1223.8,714 1221.9,720.9 1216.2,720.9 1217.5,710.2 1216.2,704" fill="#d47508"/>
<polygon points="1203.8,734 1210,740.2 1211.9,749 1206.2,746.5 1204.4,741.5" fill="#d47508"/>
<polygon points="1200.6,750.9 1206.2,747.1 1205.6,754.6" fill="#d47508"/>
<polygon points="1211.9,749 1217.5,751.5 1213.8,755.9" fill="#d47508"/>
<polygon points="1201.2,767.8 1208.1,762.8 1205.6,771.5" fill="#d47508"/>
<polygon points="1223.1,729 1230,731.5 1233.8,730.2 1238.8,735.2 1241.2,731.5 1242.5,739 1246.2,749 1246.2,759 1242.5,764 1250,764 1256.2,774 1261.2,781.5 1266.2,789 1265,795.2 1271.2,792.8 1268.8,800.2 1275,807.8 1280,810.2 1276.2,819 1280,822.8 1276.2,827.8 1281.2,834 1280,839 1228.8,839 1227.5,826.5 1225,816.5 1225,806.5 1220,797.8 1218.8,789 1216.2,779 1217.5,774 1210,775.9 1212.5,766.5 1213.8,757.8 1218.8,754 1217.5,741.5 1225,740.2 1223.8,734" fill="#d47508"/>
<polygon points="1271.2,653 1270,659 1266.2,660.9 1262.5,672.8 1263.8,682.1 1270,671.5 1274.4,679 1276.2,689 1281.2,699 1285,695.9 1290,702.8 1291.2,706.5 1295,704 1301,707.8 1301,653" fill="#d47508"/>
<polygon points="1301,712.1 1291.2,716.5 1286.2,721.5 1291.2,729 1296.2,732.8 1301,733.4" fill="#d47508"/>
<polygon points="1278.1,725.2 1282.5,727.8 1284.4,736.5 1281.9,741.5 1280,734" fill="#d47508"/>
<polygon points="1281.9,737.8 1286.9,737.8 1283.8,742.8" fill="#d47508"/>
<polygon points="1290,739 1295,745.2 1297.5,756.5 1301,762.8 1301,802.8 1296.2,801.5 1291.9,792.8 1293.8,789 1288.1,782.8 1292.5,777.1 1286.9,774 1291.2,769.6 1285.6,766.5 1287.5,759.6 1281.9,752.8 1283.8,747.1" fill="#d47508"/>
<polygon points="1301,825.2 1295,829 1292.5,834 1291.2,839 1301,839" fill="#d47508"/>
<polygon points="1231.2,766.5 1236.2,771.5 1235.6,780.2 1231.9,786.5 1226.2,784 1230.6,780.2" fill="#7a1d01"/>
<polygon points="1232.5,789 1238.8,794 1237.5,801.5 1241.2,805.2 1237.5,810.2 1230.6,799.6 1232.5,795.2" fill="#7a1d01"/>
<polygon points="1240,816.5 1247.5,811.5 1251.2,812.1 1248.1,819" fill="#7a1d01"/>
<polygon points="1248.1,820.2 1255,825.2 1256.2,834 1261.9,832.1 1260,839 1253.8,839 1251.9,829" fill="#7a1d01"/>
<polygon points="1299,653 1450,653 1453.1,670.2 1448.8,691.5 1450,714 1448.8,734 1453.1,744 1445,751.5 1446.2,779 1450,781.5 1445,787.8 1452.5,796.5 1447.5,801.5 1453.1,811.5 1451.9,820.2 1455.6,824 1452.5,829 1455,839 1299,839" fill="#d47508"/>
<polygon points="1321.2,653 1342.5,653 1350,666.5 1351.2,674.6 1362.5,667.1 1366.2,670.9 1360,679 1350,684.6 1343.8,685.9 1342.5,691.5 1348.8,695.2 1358.8,695.2 1358.8,702.8 1352.5,704 1350,709 1341.2,706.5 1335,710.2 1330,709 1335,701.5 1336.2,691.5 1333.8,686.5 1337.5,679 1333.8,666.5 1328.8,661.5" fill="#7a1d01"/>
<polygon points="1299,734 1307.5,735.2 1312.5,730.9 1317.5,736.5 1323.8,736.5 1326.9,741.5 1325,749 1332.5,757.8 1326.2,761.5 1328.8,766.5 1323.8,769 1326.2,779 1325,785.2 1332.5,787.8 1328.8,794 1331.2,804 1337.5,805.2 1328.8,810.2 1331.2,816.5 1336.2,819 1340,829 1337.5,839 1323.8,839 1328.8,832.8 1322.5,829 1325,820.2 1321.2,812.8 1316.2,804 1320,800.2 1313.8,797.8 1317.5,790.2 1302.5,790.2 1307.5,784 1302.5,780.2 1308.8,776.5 1305,766.5 1299,764" fill="#7a1d01"/>
<polygon points="1299,705.2 1305.6,709 1299,712.8" fill="#7a1d01"/>
<polygon points="1330,731.5 1332.5,729 1341.2,732.8 1348.8,734 1353.8,729 1347.5,721.5 1342.5,719 1346.2,712.8 1352.5,716.5 1358.8,712.8 1362.5,709 1365,701.5 1370,700.2 1373.8,707.8 1378.8,710.2 1375,712.8 1367.5,715.2 1370,720.2 1371.2,726.5 1367.5,734 1370,741.5 1362.5,744 1355,744 1360,750.2 1363.8,757.8 1365,764 1361.2,765.2 1355,760.2 1352.5,752.8 1346.2,745.2 1348.8,741.5 1337.5,740.2 1335,735.2" fill="#7a1d01"/>
<polygon points="1377.5,653 1398.8,653 1396.2,661.5 1398.8,666.5 1395,675.2 1400,679 1392.5,682.8 1400,690.2 1393.8,695.2 1391.2,700.2 1395,706.5 1387.5,716.5 1392.5,719 1385,724 1386.2,727.8 1396.2,734 1403.8,731.5 1410,734 1413.8,741.5 1408.8,744 1407.5,752.8 1403.8,756.5 1387.5,756.5 1382.5,760.2 1375,762.8 1380,759 1386.2,754 1390,744 1387.5,740.2 1377.5,730.2 1381.2,724 1377.5,719 1387.5,710.2 1380,697.8 1387.5,695.2 1390,689 1385,681.5 1390,672.8 1387.5,664 1380,659" fill="#7a1d01"/>
<polygon points="1410,672.8 1415,676.5 1420,686.5 1416.2,685.2 1412.5,681.5" fill="#7a1d01"/>
<polygon points="1412.5,695.2 1417.5,699 1413.8,706.5 1407.5,707.8 1412.5,704" fill="#7a1d01"/>
<polygon points="1410,724 1415,726.5 1411.2,734 1408.8,729" fill="#7a1d01"/>
<polygon points="1351.2,765.2 1358.8,764 1365,766.5 1371.2,769 1373.8,776.5 1370,784 1365,785.2 1370,791.5 1373.8,795.2 1370,802.8 1365,805.2 1358.8,807.8 1362.5,816.5 1370,820.2 1372.5,826.5 1365,829 1360,839 1346.2,839 1355,834 1362.5,824 1358.8,816.5 1360,807.8 1357.5,799 1361.2,791.5 1355,784 1355,776.5 1351.2,771.5" fill="#7a1d01"/>
<polygon points="1375,784 1380,786.5 1381.2,795.2 1377.5,804 1373.8,800.2 1371.2,792.8 1370,786.5" fill="#7a1d01"/>
<polygon points="1400,789 1406.2,784 1406.2,791.5 1403.8,797.8 1400,804 1401.2,816.5 1403.8,826.5 1400,831.5 1398.8,821.5 1397.5,810.2" fill="#7a1d01"/>
<polygon points="1341.9,810.2 1348.1,814 1347.5,817.8 1342.5,816.5" fill="#7a1d01"/>
<polygon points="1348.8,812.8 1353.8,811.5 1352.5,817.8" fill="#7a1d01"/>
<polygon points="1435,667.8 1441.2,664.6 1440,671.5" fill="#7a1d01"/>
<polygon points="1438.8,674 1443.8,677.8 1438.8,680.2" fill="#7a1d01"/>
<polygon points="1437.5,681.5 1443.8,683.4 1438.8,686.5" fill="#7a1d01"/>
<polygon points="1434.4,691.5 1438.8,687.8 1441.2,692.8" fill="#7a1d01"/>
<polygon points="1442.5,695.2 1450,694 1445,699" fill="#7a1d01"/>
<polygon points="1433.1,717.8 1436.2,712.1 1440.6,719 1437.5,722.1" fill="#7a1d01"/>
<polygon points="1438.8,726.5 1443.8,729 1440.6,732.1" fill="#7a1d01"/>
<polygon points="1434.4,743.4 1441.2,744 1437.5,748.4" fill="#7a1d01"/>
<polygon points="1401.2,654 1412.5,653 1415,661.5 1414.4,672.8 1408.8,674 1412.5,682.8 1413.8,695.2 1411.2,704 1406.2,707.8 1407.5,716.5 1411.2,724 1408.8,734 1401.2,731.5 1396.2,734 1386.2,727.8 1385,724 1392.5,719 1387.5,716.5 1395,706.5 1391.2,700.2 1393.8,695.2 1400,690.2 1392.5,682.8 1400,679 1395,675.2 1398.8,666.5 1396.2,661.5" fill="#ff0a0a"/>
<polygon points="1385,759 1390,756.5 1403.8,757.1 1407.5,764 1400,769 1406.2,775.2 1406.9,782.8 1400,790.2 1398.8,797.8 1401.2,807.8 1400,816.5 1397.5,829 1396.2,839 1367.5,839 1372.5,829 1377.5,820.2 1378.8,807.8 1381.2,797.8 1382.5,786.5 1387.5,779 1381.9,775.2 1390,769 1387.5,764" fill="#ff0a0a"/>
<polygon points="1353.8,706.5 1358.8,704 1358.8,709" fill="#ff0a0a"/>
<polygon points="1348.1,732.8 1350.6,729 1351.9,734" fill="#ff0a0a"/>
<polygon points="1346.2,744.6 1351.2,745.2 1356.9,752.8 1353.8,754 1350,751.5" fill="#ff0a0a"/>
<polygon points="1356.9,764.6 1362.5,765.2 1361.2,769" fill="#ff0a0a"/>
<polygon points="1365,805.2 1370.6,809 1365.6,812.1" fill="#ff0a0a"/>
<polygon points="1419.4,740.2 1423.8,741.5 1427.5,746.5 1430,752.8 1429.4,760.2 1431.2,766.5 1427.5,774 1431.2,779 1430.6,786.5 1433.8,791.5 1431.2,797.8 1432.5,810.2 1433.8,816.5 1430,822.8 1426.2,829 1425,839 1408.8,839 1411.9,829 1412.5,816.5 1415,791.5 1416.2,766.5 1417.5,751.5" fill="#e9ca0b"/>
<polygon points="1407.5,804 1411.2,801.5 1412.5,816.5 1410,824 1408.8,816.5 1410,810.2" fill="#e9ca0b"/>
<polygon points="1410,784 1413.1,784.6 1413.1,791.5" fill="#e9ca0b"/>
<polygon points="1437.5,661.5 1443.8,654 1450,653 1449.4,661.5 1443.8,664 1448.8,667.8 1453.1,670.2 1447.5,671.5 1442.5,666.5" fill="#e9ca0b"/>
<polygon points="1438.8,686.5 1443.8,685.2 1442.5,690.2" fill="#e9ca0b"/>
<polygon points="1423.1,696.5 1428.8,699 1430,704 1425,705.9 1422.5,702.8" fill="#e9ca0b"/>
<polygon points="1435.6,704 1441.2,694 1445,700.2 1446.2,705.2 1442.5,709 1437.5,706.5" fill="#e9ca0b"/>
<polygon points="1442.5,709 1448.1,706.5 1448.8,714 1443.8,716.5 1446.2,721.5 1441.2,720.2 1443.8,714" fill="#e9ca0b"/>
<polygon points="1440,724 1446.2,722.1 1449.4,729 1448.8,734 1443.8,734 1442.5,729" fill="#e9ca0b"/>
<polygon points="1445,741.5 1448.8,737.8 1448.8,744" fill="#e9ca0b"/>
<polygon points="1435,757.8 1441.2,754 1445.6,756.5 1445,760.2 1437.5,762.8 1432.5,764 1430,763.4" fill="#e9ca0b"/>
<polygon points="1436.2,766.5 1440,767.8 1438.8,770.9" fill="#e9ca0b"/>
<polygon points="1440,780.2 1442.5,779 1445.6,785.2 1446.2,795.2 1452.5,796.5 1447.5,801.5 1446.2,799 1438.8,795.2 1443.8,791.5 1441.2,787.8 1432.5,790.2 1430.6,786.5 1437.5,784" fill="#e9ca0b"/>
<polygon points="1443.8,821.5 1446.9,815.2 1449.4,821.5 1447.5,827.8 1451.9,829 1454.4,839 1445,839 1446.2,831.5" fill="#e9ca0b"/>
<polygon points="1442.5,745.2 1448.1,745.2 1445,752.8" fill="#0a6c26"/>
<polygon points="1435.6,765.2 1441.2,760.9 1446.2,760.2 1443.8,765.2 1438.8,766.5" fill="#0a6c26"/>
<polygon points="1438.8,770.9 1443.8,767.8 1445,770.9 1441.2,772.1" fill="#0a6c26"/>
<polygon points="1446.9,827.8 1450,822.8 1455,822.8 1451.9,827.1" fill="#0a6c26"/>
<polygon points="1441.2,765.9 1445.6,765.9 1445.6,770.2 1442.5,769" fill="#10cde6"/>
<polygon points="1438.8,772.1 1445.6,770.9 1443.1,778.4" fill="#10cde6"/>
<polygon points="1443.1,780.2 1449.4,782.8 1445.6,786.5" fill="#10cde6"/>
<polygon points="1228.8,837 1233.8,844.2 1230.6,850.5 1232.5,863 1238.8,873 1246.2,880.5 1251.9,891.8 1245,893 1247.5,898 1242.5,898 1243.8,904.2 1235,905.5 1242.5,910.5 1237.5,915.5 1247.5,923 1251.9,928 1250.6,933.6 1256.2,933 1261.2,939.2 1266.2,950.5 1273.8,961.8 1277.5,970.5 1283.1,965.5 1283.1,970.5 1278.1,973 1281.9,981.8 1283.8,984.2 1277.5,985.5 1271.9,989.2 1277.5,995.5 1275.6,1006.8 1285,1009.2 1290,999.2 1296.2,996.8 1298.8,990.5 1303.1,993 1298.8,981.8 1303.1,970.5 1312.5,966.8 1310,963 1305,963 1310,958 1315,956.8 1316.2,948 1322.5,944.2 1327.5,945.5 1331,948 1331,837" fill="#d47508"/>
<polygon points="1257.5,837 1262.5,838 1265,845.5 1261.2,848" fill="#7a1d01"/>
<polygon points="1263.8,854.2 1270,845.5 1267.5,851.8" fill="#7a1d01"/>
<polygon points="1280,837 1293.8,837 1292.5,844.2 1287.5,839.2 1282.5,840.5" fill="#7a1d01"/>
<polygon points="1327.5,837 1331,837 1331,843" fill="#7a1d01"/>
<polygon points="1281.9,991.8 1287.5,992.4 1283.8,996.8" fill="#7a1d01"/>
<polygon points="1281.9,999.2 1286.2,1001.8 1282.5,1004.2" fill="#7a1d01"/>
<polygon points="1265.6,898 1270.6,893 1275,894.2 1281.2,900.5 1276.9,904.2 1281.9,908 1277.5,913 1276.2,919.2 1275,928 1278.8,933 1276.9,941.8 1280,949.2 1275,952.4 1268.8,939.2 1272.5,936.8 1275,930.5 1268.8,930.5 1266.9,925.5 1268.8,919.2 1273.8,918 1271.2,913 1263.8,908.6 1268.8,904.2" fill="#e9ca0b"/>
<polygon points="1305.6,903 1313.1,899.9 1317.5,905.5 1318.8,915.5 1318.8,923 1326.2,924.2 1322.5,928 1327.5,930.5 1321.2,934.2 1318.8,940.5 1311.2,943 1307.5,950.5 1305,961.8 1298.8,968 1303.1,970.5 1298.8,981.8 1291.2,986.1 1285,984.2 1283.1,974.2 1287.5,963 1286.2,953 1290,941.8 1292.5,933 1299.4,936.8 1298.8,920.5 1305,913 1308.8,908" fill="#e9ca0b"/>
<polygon points="1327.5,925.5 1331,924.2 1331,933 1328.8,931.8" fill="#ff0a0a"/>
<polygon points="1320,954.2 1326.2,956.8 1331,946.8 1331,970.5 1327.5,970.5 1328.8,963 1325,961.8" fill="#ff0a0a"/>
<polygon points="1198.1,889.2 1202.5,886.8 1204.4,891.1" fill="#ff0a0a"/>
<polygon points="1191.2,893 1198.1,896.8 1192.5,900.5" fill="#ff0a0a"/>
<polygon points="1183.8,905.5 1191.9,901.1 1188.8,907.4" fill="#ff0a0a"/>
<polygon points="1183.8,918 1186.2,913 1188.8,917.4" fill="#ff0a0a"/>
<polygon points="1178.1,923 1183.8,919.9 1188.1,924.2 1181.2,927.4" fill="#ff0a0a"/>
<polygon points="1184.4,946.8 1190,951.8 1190,958 1185,953" fill="#ff0a0a"/>
<polygon points="1178.1,978.6 1187.5,968 1188.8,974.2 1185,979.2" fill="#ff0a0a"/>
<polygon points="1195.6,969.9 1203.1,968 1207.5,975.5 1213.8,983.6 1198.1,983 1201.2,975.5" fill="#ff0a0a"/>
<polygon points="1193.8,876.8 1199.4,871.1 1201.2,878" fill="#d47508"/>
<polygon points="1176.9,908 1180,901.8 1183.1,908 1179.4,913.6" fill="#d47508"/>
<polygon points="1204.4,919.9 1211.2,915.5 1212.5,920.5 1218.1,918 1215,925.5 1208.8,924.2" fill="#d47508"/>
<polygon points="1205,928 1210.6,926.1 1209.4,930.5" fill="#d47508"/>
<polygon points="1167.5,933 1172.5,928 1180,927.4 1177.5,933 1174.4,940.5 1176.9,946.8 1178.1,949.2 1183.8,953 1179.4,956.8 1177.5,953 1173.1,948 1167.5,941.8 1170,936.8" fill="#d47508"/>
<polygon points="1162.5,947.4 1168.8,946.8 1165,951.8" fill="#d47508"/>
<polygon points="1164.4,952.4 1171.2,953 1167.5,957.4" fill="#d47508"/>
<polygon points="1160.6,956.1 1166.2,961.8 1172.5,959.9 1168.8,969.2 1163.8,968" fill="#d47508"/>
<polygon points="1172.5,960.5 1178.8,958 1176.2,970.5 1178.1,979.2 1182.5,985.5 1175,986.1 1170.6,978 1171.2,968" fill="#d47508"/>
<polygon points="1156.9,980.5 1163.1,978 1163.1,984.2" fill="#d47508"/>
<polygon points="1157.5,987.4 1163.8,984.9 1164.4,991.1" fill="#d47508"/>
<polygon points="1172.5,1001.8 1175,1000.5 1178.8,1006.1 1186.9,1004.2 1185,1010.5 1188.8,1011.8 1197.5,1010.5 1196.2,1005.5 1203.8,1006.1 1206.2,1013 1206.9,1023 1176.2,1023 1173.8,1010.5" fill="#d47508"/>
<polygon points="1311.9,1023 1315,1015.5 1317.5,1020.5 1325,1014.2 1331,1013 1331,1023" fill="#d47508"/>
<polygon points="1329,837 1456.2,837 1453.8,848 1462.5,856.8 1460,860.5 1466.9,863.6 1460,869.2 1457.5,878 1461.9,881.8 1457.5,885.5 1460,891.8 1462.5,900.5 1463.8,915.5 1456.2,914.2 1455,920.5 1460.6,926.8 1450,933 1448.8,944.2 1450,950.5 1446.2,958 1448.8,964.2 1443.1,964.2 1443.8,970.5 1438.8,976.8 1445,978 1442.5,984.2 1450,986.8 1442.5,990.5 1438.8,985.5 1435,989.2 1436.2,994.2 1427.5,999.2 1430,1006.8 1428.8,1023 1329,1023" fill="#d47508"/>
<polygon points="1396.2,837 1406.2,837 1400,853 1395,870.5 1391.2,888 1385,905.5 1382.5,918 1376.2,933 1371.2,945.5 1366.2,961.8 1358.8,964.2 1361.2,973 1355,985.5 1342.5,988 1337.5,1000.5 1329,1013 1329,968 1332.5,968 1337.5,973 1340,969.2 1343.8,973 1347.5,970.5 1351.2,963 1358.8,958 1365,948 1367.5,933 1373.8,925.5 1376.2,913 1381.2,908 1380,898 1385,888 1388.8,874.2 1388.8,858 1393.8,854.2 1390,850.5 1397.5,845.5" fill="#7a1d01"/>
<polygon points="1329,837 1337.5,838 1341.2,841.8 1343.8,837 1367.5,837 1366.2,845.5 1350,843 1350,854.2 1346.2,866.8 1342.5,870.5 1340,868 1335,869.2 1330,860.5 1329,861.8" fill="#7a1d01"/>
<polygon points="1356.2,854.2 1360,858 1362.5,869.2 1355,879.2 1347.5,893 1345,908 1338.8,913 1335,923 1329,925.5 1329,915.5 1335,913 1340,900.5 1333.8,895.5 1342.5,891.8 1337.5,884.2 1342.5,880.5 1348.8,873 1355,863" fill="#7a1d01"/>
<polygon points="1435.6,863 1440,858 1443.1,862.4 1437.5,868.6" fill="#7a1d01"/>
<polygon points="1389.4,871.8 1395.6,870.5 1391.9,885.5 1387.8,888" fill="#d47508"/>
<polygon points="1383.8,905.5 1388.1,904.2 1386.9,915.5 1383.1,916.8" fill="#d47508"/>
<polygon points="1367.5,950.5 1371.9,949.2 1370.6,958 1366.9,959.9" fill="#d47508"/>
<polygon points="1358.1,964.9 1366.2,962.4 1361.2,973" fill="#d47508"/>
<polygon points="1353.8,975.5 1360.6,974.2 1358.1,981.8" fill="#d47508"/>
<polygon points="1367.5,837 1396.2,837 1397.5,845.5 1390,850.5 1393.8,854.2 1388.8,858 1388.8,874.2 1385,888 1380,898 1381.2,908 1376.2,913 1373.8,925.5 1367.5,933 1365,948 1358.8,958 1351.2,963 1347.5,970.5 1343.8,973 1340,969.2 1337.5,973 1332.5,968 1329,969.2 1329,925.5 1335,923 1338.8,913 1345,908 1347.5,893 1355,879.2 1362.5,869.2 1358.8,865.5 1367.5,854.2 1371.2,848 1366.2,845.5" fill="#ff0a0a"/>
<polygon points="1450,984.2 1451.9,979.9 1456.9,986.8 1455,992.4" fill="#ff0a0a"/>
<polygon points="1410,837 1425,837 1427.5,848 1426.2,860.5 1422.5,873 1421.9,885.5 1423.8,894.2 1420,903 1418.8,913 1420,920.5 1415,928 1412.5,938 1415,950.5 1416.2,955.5 1412.5,959.2 1416.2,963 1408.8,965.5 1410,970.5 1405,975.5 1401.2,984.2 1397.5,988 1400,995.5 1395,1000.5 1400,1004.2 1391.2,1006.8 1392.5,1011.8 1387.5,1015.5 1383.8,1023 1335,1023 1337.5,1015.5 1342.5,1008 1350,1003 1348.8,994.2 1358.8,981.8 1357.5,978 1367.5,961.8 1371.2,950.5 1377.5,933 1383.8,918 1386.2,908 1392.5,888 1396.2,871.8 1401.2,856.8 1405,843" fill="#e9ca0b"/>
<polygon points="1435,918 1442.5,914.2 1443.1,918 1436.2,925.5 1437.5,935.5 1438.8,948 1433.8,958 1431.2,963 1435,969.2 1430,976.8 1428.8,984.2 1426.2,989.2 1417.5,981.8 1411.2,986.8 1405,975.5 1410,970.5 1408.8,965.5 1416.2,963 1412.5,959.2 1416.2,955.5 1422.5,950.5 1427.5,938 1433.8,925.5" fill="#e9ca0b"/>
<polygon points="1447.5,838 1455,837 1456.2,843 1453.8,848 1448.8,846.8 1445,845.5" fill="#e9ca0b"/>
<polygon points="1445,850.5 1451.2,849.2 1453.8,855.5 1448.8,855.5" fill="#e9ca0b"/>
<polygon points="1455,856.8 1462.5,856.8 1460,860.5 1466.9,863.6 1460,869.2 1457.5,878 1454.4,873 1456.2,865.5" fill="#e9ca0b"/>
<polygon points="1457.5,880.5 1461.9,881.8 1458.8,885.5" fill="#e9ca0b"/>
<polygon points="1443.8,901.8 1455,891.8 1460,893 1460.6,903 1457.5,911.8 1455,918 1453.8,911.8 1448.8,908 1443.1,913 1440,918 1437.5,915.5 1447.5,906.8" fill="#e9ca0b"/>
<polygon points="1423.8,898 1428.8,899.2 1426.2,903" fill="#e9ca0b"/>
<polygon points="1419.4,920.5 1425,919.9 1422.5,925.5" fill="#e9ca0b"/>
<polygon points="1397.5,1008 1405,1005.5 1410,1001.8 1417.5,999.2 1415,1006.8 1417.5,1013 1415,1023 1385,1023 1390,1014.2 1395,1013" fill="#e9ca0b"/>
<polygon points="1340.6,1023 1342.5,1015.5 1350,1011.8 1350,1003 1357.5,999.2 1365,994.2 1368.8,996.8 1372.5,990.5 1378.8,989.2 1378.8,999.2 1373.8,1003 1376.2,1008 1371.2,1013 1370,1023" fill="#0a6c26"/>
<polygon points="1378.8,982.4 1382.5,978 1383.8,983.6" fill="#0a6c26"/>
<polygon points="1398.1,1008.6 1408.8,1003 1408.1,1008 1402.5,1011.8" fill="#0a6c26"/>
<polygon points="1170,1021 1207.5,1021 1210,1029.5 1215,1038.2 1213.8,1047 1215.6,1059.5 1221.2,1062 1217.5,1068.2 1223.8,1068.2 1221.2,1074.5 1227.5,1074.5 1223.8,1084.5 1220,1092 1215,1098.2 1213.8,1103.2 1219.4,1113.2 1226.2,1109.5 1237.5,1103.2 1247.5,1102 1255,1102 1261,1098.2 1261,1207 1130,1207 1122.5,1198.2 1110,1190.8 1097.5,1182 1085,1172 1072.5,1162 1065.6,1152 1072.5,1139.5 1078.8,1132 1080,1125.8 1087.5,1122 1096.2,1118.2 1098.1,1113.2 1101.9,1120.8 1105.6,1122 1106.9,1118.2 1118.1,1122.6 1130,1115.8 1131.9,1124.5 1137.5,1128.2 1136.9,1137 1141.2,1145.8 1135,1150.8 1140,1154.5 1146.2,1147 1142.5,1139.5 1147.5,1134.5 1142.5,1130.8 1143.1,1123.2 1147.5,1120.8 1146.2,1112 1148.8,1107 1146.2,1102 1142.5,1094.5 1146.2,1084.5 1152.5,1077 1158.8,1073.2 1162.5,1074.5 1162.5,1064.5 1166.9,1057 1162.5,1052 1168.8,1050.8 1163.8,1044.5 1170.6,1042 1166.2,1034.5 1173.8,1029.5" fill="#d47508"/>
<polygon points="1205,1084.5 1209.4,1078.2 1211.9,1080.8 1208.8,1093.2 1206.9,1090.1" fill="#7a1d01"/>
<polygon points="1195,1093.2 1196.9,1089.5 1202.5,1098.2 1205.6,1103.2 1206.2,1108.2 1200,1102" fill="#7a1d01"/>
<polygon points="1199.4,1118.2 1205,1116.4 1202.5,1122" fill="#7a1d01"/>
<polygon points="1121.9,1168.2 1128.1,1162.6 1127.5,1169.5" fill="#7a1d01"/>
<polygon points="1135,1185.8 1141.2,1180.8 1146.2,1178.2 1146.2,1183.2 1141.2,1187 1137.5,1188.2" fill="#7a1d01"/>
<polygon points="1128.1,1192.6 1133.8,1189.5 1131.9,1193.9" fill="#7a1d01"/>
<polygon points="1243.1,1054.5 1247.5,1052 1251.2,1052.6 1251.2,1059.5 1261,1052 1261,1063.2 1255,1070.8 1251.9,1079.5 1247.5,1075.8 1243.8,1077 1242.5,1083.2 1237.5,1079.5 1242.5,1075.8 1240,1069.5 1246.2,1063.2" fill="#ff0a0a"/>
<polygon points="1233.1,1069.5 1238.8,1068.9 1236.2,1073.2" fill="#d47508"/>
<polygon points="1179.4,1104.5 1182.5,1099.5 1185,1104.5 1190,1098.2 1193.1,1104.5 1190,1109.5 1190,1115.8 1196.2,1118.2 1198.8,1122 1195.6,1125.8 1201.2,1128.2 1205,1133.2 1206.2,1128.2 1213.8,1125.8 1217.5,1117 1222.5,1117 1227.5,1114.5 1235,1109.5 1243.8,1104.5 1250,1103.9 1255,1102.6 1261,1098.9 1261,1207 1147.5,1207 1147.5,1179.5 1151.2,1175.8 1156.2,1172 1155,1167 1160,1168.2 1158.8,1162 1163.8,1160.8 1157.5,1154.5 1153.8,1147 1153.8,1142 1156.2,1137 1160,1134.5 1167.5,1132 1171.2,1128.2 1167.5,1125.8 1172.5,1122 1175,1117 1176.2,1113.2 1183.8,1109.5" fill="#e9ca0b"/>
<polygon points="1162.5,1140.8 1166.2,1139.5 1170,1145.8 1172.5,1152 1175,1154.5 1170,1157 1168.8,1152 1165,1147" fill="#d47508"/>
<polygon points="1205.6,1102 1211.9,1100.8 1208.1,1107.6" fill="#e9ca0b"/>
<polygon points="1073.8,1154.5 1080,1147 1083.8,1153.2 1086.9,1148.2 1092.5,1154.5 1096.2,1159.5 1101.2,1163.2 1103.8,1159.5 1107.5,1167 1112.5,1168.2 1116.2,1169.5 1120,1174.5 1122.5,1179.5 1127.5,1183.2 1135,1183.2 1131.2,1188.2 1125,1189.5 1120,1188.2 1118.8,1183.2 1115,1184.5 1113.8,1180.8 1110,1179.5 1108.8,1174.5 1102.5,1172 1101.2,1168.2 1096.2,1167 1095,1163.2 1090,1162 1088.8,1158.2 1083.8,1158.2 1081.2,1154.5 1076.2,1157.6" fill="#e9ca0b"/>
<polygon points="1069.4,1140.8 1073.8,1139.5 1071.9,1143.9" fill="#10cde6"/>
<polygon points="1066.9,1148.2 1071.9,1145.8 1072.5,1150.8 1068.8,1150.8" fill="#10cde6"/>
<polygon points="1147.5,1183.2 1150,1178.2 1152.5,1175.8 1156.2,1172 1160,1168.2 1163.8,1169.5 1168.8,1164.5 1172.5,1158.2 1175.6,1154.5 1172.5,1150.8 1176.2,1147 1175,1143.2 1182.5,1142 1188.8,1138.9 1192.5,1143.2 1197.5,1148.2 1202.5,1147 1210,1143.2 1217.5,1142 1216.2,1138.2 1223.8,1135.8 1232.5,1132 1232.5,1127 1237.5,1123.2 1243.8,1120.8 1252.5,1117 1261,1112 1261,1207 1150,1207 1146.2,1184.5" fill="#0a6c26"/>
<polygon points="1185,1147 1190,1143.9 1193.8,1145.8 1191.2,1150.8 1185.6,1152" fill="#e9ca0b"/>
<polygon points="1152.5,1180.1 1160,1180.8 1166.2,1175.8 1172.5,1169.5 1180,1167 1188.8,1164.5 1197.5,1160.8 1207.5,1158.2 1215,1155.8 1221.2,1148.2 1226.2,1148.2 1226.2,1142 1235,1138.2 1238.8,1132 1247.5,1127 1255,1120.8 1261,1117 1261,1207 1155,1207 1147.5,1194.5 1152.5,1188.2" fill="#10cde6"/>
<polygon points="1162.5,1162 1167.5,1164.5 1163.8,1167.6" fill="#10cde6"/>
<polygon points="1158.8,1200.8 1167.5,1195.8 1172.5,1189.5 1178.8,1185.8 1183.8,1183.2 1190,1180.8 1192.5,1174.5 1197.5,1168.2 1202.5,1172 1206.2,1167 1212.5,1162 1216.2,1155.8 1221.2,1159.5 1227.5,1159.5 1232.5,1164.5 1237.5,1162 1238.1,1169.5 1241.2,1174.5 1238.8,1183.2 1232.5,1188.2 1228.8,1194.5 1230,1202 1226.2,1207 1140,1207 1147.5,1197 1152.5,1202" fill="#04043a"/>
<polygon points="1195.6,1172 1197.5,1168.2 1201.2,1172 1205.6,1178.2 1201.2,1177 1194.4,1182 1193.1,1178.2" fill="#10cde6"/>
<polygon points="1259,1077 1265,1082 1272.5,1072 1276.2,1077 1281.2,1072 1285,1063.2 1292.5,1059.5 1297.5,1049.5 1302.5,1047 1306.2,1038.2 1305,1032 1310,1028.2 1307.5,1024.5 1313.8,1021 1426.2,1021 1422.5,1029.5 1421.2,1038.2 1416.2,1043.2 1410,1049.5 1407.5,1057 1403.8,1060.8 1402.5,1064.5 1410,1068.2 1406.2,1077 1408.8,1080.8 1402.5,1087 1405,1092 1397.5,1099.5 1392.5,1107 1386.2,1112 1382.5,1119.5 1388.8,1120.8 1386.2,1125.8 1391.2,1127 1395,1117 1398.8,1120.8 1405,1119.5 1410,1117 1408.8,1112 1413.8,1108.2 1417.5,1100.8 1421.2,1097 1425,1089.5 1427.5,1082 1433.8,1082 1432.5,1074.5 1437.5,1068.2 1443.8,1062 1448.8,1057.6 1451.2,1062 1458.8,1065.1 1451.2,1077 1447.5,1079.5 1440,1087 1437.5,1092 1428.8,1102 1421.2,1109.5 1416.2,1117 1412.5,1123.2 1408.8,1127 1401.2,1130.8 1400,1137 1392.5,1143.2 1387.5,1142 1392.5,1147 1385,1153.2 1381.2,1158.2 1380,1165.8 1376.2,1167 1377.5,1174.5 1376.2,1183.2 1378.8,1187 1373.8,1189.5 1375,1195.8 1371.2,1202 1370,1207 1259,1207" fill="#d47508"/>
<polygon points="1407.5,1050.8 1413.8,1047 1416.2,1053.2 1410,1058.2" fill="#d47508"/>
<polygon points="1413.8,1044.5 1420,1040.8 1423.8,1045.8 1417.5,1048.2" fill="#d47508"/>
<polygon points="1417.5,1059.5 1426.2,1058.2 1422.5,1064.5" fill="#d47508"/>
<polygon points="1405,1062 1410,1059.5 1421.2,1065.8 1420,1070.1 1410,1068.2" fill="#d47508"/>
<polygon points="1443.1,1077 1448.1,1070.8 1450,1078.9" fill="#7a1d01"/>
<polygon points="1275,1040.8 1277.5,1030.8 1280.6,1026.4 1281.9,1034.5 1280,1041.4" fill="#ff0a0a"/>
<polygon points="1259,1047 1270,1046.4 1265,1057 1267.5,1064.5 1259,1065.8" fill="#ff0a0a"/>
<polygon points="1259,1093.2 1265,1087 1272.5,1089.5 1276.2,1084.5 1285,1077 1285,1072 1292.5,1070.8 1300,1059.5 1307.5,1057 1315,1047 1322.5,1039.5 1325,1032 1328.1,1028.2 1332.5,1021 1416.2,1021 1415,1028.2 1407.5,1034.5 1402.5,1040.8 1401.2,1050.8 1397.5,1054.5 1395,1063.2 1393.8,1070.8 1388.8,1077 1390,1084.5 1386.2,1092 1380,1097 1372.5,1099.5 1380,1104.5 1380,1112 1375,1119.5 1370,1123.2 1368.8,1132 1360,1138.2 1362.5,1143.2 1355,1142 1350,1147 1348.8,1152 1342.5,1157 1350,1158.2 1352.5,1163.2 1346.2,1165.8 1348.8,1170.8 1341.2,1175.8 1335,1179.5 1333.8,1187 1336.2,1190.8 1328.8,1193.2 1331.2,1197 1326.2,1199.5 1330,1207 1259,1207" fill="#e9ca0b"/>
<polygon points="1375,1037 1378.8,1029.5 1383.8,1023.2 1386.2,1028.2 1380,1029.5 1385,1034.5 1392.5,1038.2 1390,1042 1383.8,1039.5 1377.5,1044.5" fill="#d47508"/>
<polygon points="1397.5,1044.5 1401.2,1039.5 1402.5,1045.1" fill="#d47508"/>
<polygon points="1366.9,1107 1373.1,1108.2 1367.5,1113.9" fill="#d47508"/>
<polygon points="1348.1,1133.2 1352.5,1136.4 1348.8,1138.2" fill="#d47508"/>
<polygon points="1259,1109.5 1267.5,1103.2 1275,1102 1282.5,1104.5 1286.2,1093.2 1280,1089.5 1282.5,1085.8 1288.8,1087 1292.5,1079.5 1301.2,1075.8 1311.2,1069.5 1313.8,1062 1316.2,1053.2 1325,1045.8 1326.2,1038.2 1333.8,1034.5 1335,1024.5 1340,1021 1370,1021 1366.2,1029.5 1366.2,1040.8 1360,1045.8 1356.2,1054.5 1355,1060.8 1352.5,1064.5 1347.5,1062 1346.2,1068.2 1337.5,1074.5 1333.8,1084.5 1332.5,1092 1330,1099.5 1327.5,1107 1322.5,1100.8 1320,1108.2 1315,1117 1312.5,1127 1308.8,1130.8 1313.8,1135.1 1320,1132 1328.8,1125.8 1330,1118.2 1335,1120.8 1336.2,1114.5 1341.2,1113.2 1338.8,1108.2 1346.2,1103.2 1355,1099.5 1350,1094.5 1355,1090.8 1360,1087 1361.2,1079.5 1366.2,1073.2 1375,1067 1382.5,1059.5 1377.5,1054.5 1390,1051.4 1385,1063.2 1382.5,1068.2 1383.8,1075.8 1375,1080.8 1376.2,1088.2 1372.5,1095.8 1367.5,1103.2 1360,1109.5 1352.5,1117 1350,1125.8 1347.5,1138.2 1340,1137 1335,1134.5 1331.2,1140.1 1340,1140.8 1342.5,1143.9 1337.5,1147 1342.5,1149.5 1335,1153.2 1327.5,1159.5 1328.8,1165.8 1321.2,1172 1310,1177 1315,1184.5 1302.5,1189.5 1296.2,1193.2 1297.5,1198.2 1291.2,1202 1285,1207 1259,1207" fill="#0a6c26"/>
<polygon points="1313.8,1147 1317.5,1139.5 1321.2,1143.2 1325,1138.2 1327.5,1140.8 1335,1135.8 1331.2,1140.1 1322.5,1144.5 1315,1143.2" fill="#e9ca0b"/>
<polygon points="1297.5,1172 1303.8,1159.5 1307.5,1157 1310,1160.8 1306.2,1163.2 1308.8,1172 1310,1175.8 1305,1177" fill="#e9ca0b"/>
<polygon points="1281.2,1183.2 1290,1179.5 1292.5,1173.2 1296.2,1175.8 1291.2,1182 1296.2,1183.2 1297.5,1188.2 1291.2,1189.5 1290,1185.8" fill="#e9ca0b"/>
<polygon points="1280,1194.5 1283.8,1189.5 1290,1190.1 1291.2,1197 1285,1200.8" fill="#e9ca0b"/>
<polygon points="1271.2,1197 1275,1202 1267.5,1207 1263.8,1207" fill="#e9ca0b"/>
<polygon points="1388.8,1028.2 1396.2,1025.1 1401.2,1030.8 1395,1030.8" fill="#0a6c26"/>
<polygon points="1259,1115.8 1267.5,1109.5 1276.2,1103.2 1282.5,1104.5 1286.9,1097 1286.9,1092 1291.2,1095.8 1300,1082 1307.5,1074.5 1313.8,1067 1320,1065.8 1321.9,1074.5 1318.8,1082 1312.5,1089.5 1307.5,1097 1306.2,1104.5 1300,1109.5 1297.5,1117 1291.2,1124.5 1292.5,1132 1288.8,1137 1283.8,1144.5 1281.2,1150.8 1273.8,1157 1267.5,1163.2 1262.5,1172 1259,1175.8" fill="#10cde6"/>
<polygon points="1135,1205 1226.2,1205 1223.8,1213.5 1218.8,1219.8 1221.2,1226 1216.2,1231 1213.1,1228.5 1211.9,1233.5 1216.2,1239.8 1210,1242.2 1206.2,1244.8 1211.2,1248.5 1212.5,1254.8 1217.5,1256 1222.5,1253.5 1223.8,1261 1235,1268.5 1245,1276 1255,1283.5 1261,1288.5 1261,1301 1135,1211" fill="#04043a"/>
<polygon points="1158.1,1215.4 1163.1,1209.8 1165,1216" fill="#0808ff"/>
<polygon points="1165.6,1215.4 1170,1211 1172.5,1216 1176.9,1219.8 1177.5,1223.5 1170,1224.8 1168.8,1219.8" fill="#0808ff"/>
<polygon points="1173.1,1211.6 1178.1,1211 1179.4,1214.8 1175.6,1216" fill="#0808ff"/>
<polygon points="1178.1,1218.5 1181.2,1215.4 1185,1218.5 1180,1221.6" fill="#0808ff"/>
<polygon points="1226.2,1205 1250,1205 1245,1212.2 1243.8,1218.5 1235,1222.2 1232.5,1231 1227.5,1242.2 1222.5,1249.8 1222.5,1253.5 1217.5,1256 1218.8,1258.5 1213.8,1254.8 1212.5,1249.8 1206.2,1244.8 1210,1242.2 1216.2,1239.8 1211.9,1233.5 1213.1,1228.5 1216.2,1231 1221.2,1226 1218.8,1219.8 1223.8,1213.5" fill="#10cde6"/>
<polygon points="1250,1205 1261,1205 1261,1243.5 1255,1248.5 1247.5,1256 1240,1261 1235,1267.2 1230,1264.8 1225,1261 1222.5,1253.5 1222.5,1249.8 1227.5,1242.2 1232.5,1231 1235,1222.2 1243.8,1218.5 1245,1212.2" fill="#0a6c26"/>
<polygon points="1244.4,1227.9 1249.4,1221.6 1251.9,1228.5" fill="#e9ca0b"/>
<polygon points="1256.2,1236 1261,1234.1 1261,1239.8 1258.1,1241" fill="#e9ca0b"/>
<polygon points="1234.4,1245.4 1240,1244.1 1236.9,1250.4" fill="#e9ca0b"/>
<polygon points="1221.9,1251.6 1226.2,1253.5 1228.8,1256 1223.8,1257.2" fill="#e9ca0b"/>
<polygon points="1261,1243.5 1255,1248.5 1247.5,1256 1240,1261 1237.5,1268.5 1243.8,1273.5 1251.2,1279.8 1256.2,1282.2 1261,1286" fill="#e9ca0b"/>
<polygon points="1261,1246 1257.5,1249.8 1255,1256 1252.5,1261 1246.2,1264.8 1245,1269.8 1251.2,1274.1 1256.2,1268.5 1256.2,1261 1261,1256" fill="#d47508"/>
<polygon points="1255,1282.2 1261,1279.8 1261,1286 1257.5,1286" fill="#0a6c26"/>
<polygon points="1392.5,1205 1390,1212.2 1383.8,1219.8 1380,1224.8 1383.8,1229.8 1380,1234.8 1385,1237.2 1381.2,1242.2 1386.2,1246 1380,1253.5 1376.2,1261 1372.5,1266 1376.2,1271 1373.8,1278.5 1366.2,1281 1357.5,1288.5 1360,1292.2 1355,1296 1347.5,1301 1345,1307.2 1347.5,1309.8 1341.2,1313.5 1337.5,1321 1340,1323.5 1335,1326 1330,1329.8 1330,1337.2 1322.5,1337.2 1310,1328.5 1297.5,1318.5 1285,1308.5 1272.5,1298.5 1259,1288.5 1259,1205" fill="#d47508"/>
<polygon points="1375,1205 1385,1205 1381.2,1212.2" fill="#7a1d01"/>
<polygon points="1373.1,1237.9 1380,1234.8 1380,1241" fill="#7a1d01"/>
<polygon points="1375,1246 1382.5,1243.5 1381.2,1249.1" fill="#7a1d01"/>
<polygon points="1336.9,1278.5 1348.8,1272.2 1347.5,1277.2 1340,1281 1338.1,1284.8" fill="#7a1d01"/>
<polygon points="1341.9,1299.8 1351.2,1296 1350,1301" fill="#7a1d01"/>
<polygon points="1259,1205 1325,1205 1322.5,1209.8 1313.8,1216 1307.5,1222.2 1301.2,1227.2 1292.5,1231 1287.5,1234.8 1297.5,1236 1298.8,1241 1292.5,1239.8 1287.5,1237.2 1285,1242.2 1281.2,1238.5 1272.5,1237.2 1267.5,1239.8 1262.5,1243.5 1259,1244.8" fill="#e9ca0b"/>
<polygon points="1259,1258.5 1267.5,1257.2 1276.2,1259.8 1285,1254.8 1292.5,1247.2 1297.5,1243.5 1296.2,1249.8 1295,1257.2 1298.8,1264.8 1297.5,1269.8 1303.8,1268.5 1307.5,1264.8 1312.5,1267.2 1317.5,1263.5 1316.2,1256 1317.5,1244.8 1322.5,1242.2 1323.8,1253.5 1325,1261 1328.8,1258.5 1330,1266 1335,1268.5 1332.5,1272.2 1337.5,1276 1336.2,1281 1338.8,1286 1335,1293.5 1330,1298.5 1325,1306 1320,1316 1317.5,1326 1310,1328.5 1297.5,1318.5 1285,1308.5 1272.5,1298.5 1259,1288.5" fill="#e9ca0b"/>
<polygon points="1282.5,1273.5 1287.5,1272.2 1289.4,1277.2 1285,1279.8" fill="#d47508"/>
<polygon points="1263.8,1279.8 1277.5,1275.4 1275,1281 1267.5,1282.2" fill="#d47508"/>
<polygon points="1280,1287.2 1283.8,1284.8 1286.2,1291 1283.8,1293.5" fill="#d47508"/>
<polygon points="1259,1205 1270,1205 1267.5,1213.5 1268.8,1222.2 1265,1229.8 1259,1232.2" fill="#0a6c26"/>
<polygon points="1276.2,1213.5 1280,1208.5 1290,1206 1286.2,1212.2 1278.8,1214.1" fill="#0a6c26"/>
<polygon points="1273.8,1226 1278.1,1221 1280.6,1228.5" fill="#0a6c26"/>
<polygon points="1300,1301 1308.8,1302.2 1312.5,1298.5 1318.8,1299.8 1318.1,1306 1323.8,1306 1328.1,1309.1 1321.2,1312.2 1318.8,1321 1315,1324.8 1311.2,1321 1305,1318.5 1298.8,1314.8 1301.2,1307.2" fill="#0a6c26"/>
<polygon points="1261.2,1277.9 1265.6,1279.8 1262.5,1282.2" fill="#0a6c26"/>
<path d="M1065.6 1150.0L1070.5 1153.5L1070.8 1147.8zM1070.5 1153.5L1075.4 1157.0L1075.7 1151.3zM1075.4 1157.0L1080.2 1160.5L1080.6 1154.8zM1080.2 1160.5L1085.1 1164.0L1085.5 1158.3zM1085.1 1164.0L1090.0 1167.5L1090.4 1161.8zM1090.0 1167.5L1094.9 1170.9L1095.2 1165.3zM1094.9 1170.9L1099.8 1174.4L1100.1 1168.8zM1099.8 1174.4L1104.6 1177.9L1105.0 1172.3zM1104.6 1177.9L1109.5 1181.4L1109.9 1175.8zM1109.5 1181.4L1114.4 1184.9L1114.8 1179.3zM1114.4 1184.9L1119.3 1188.4L1119.6 1182.7zM1119.3 1188.4L1124.2 1191.9L1124.5 1186.2zM1124.2 1191.9L1129.0 1195.4L1129.4 1189.7zM1129.0 1195.4L1133.9 1198.9L1134.3 1193.2zM1133.9 1198.9L1138.8 1202.4L1139.2 1196.7zM1138.8 1202.4L1143.7 1205.8L1144.0 1200.2zM1143.7 1205.8L1148.6 1209.3L1148.9 1203.7zM1148.6 1209.3L1153.4 1212.8L1153.8 1207.2zM1153.4 1212.8L1158.3 1216.3L1158.7 1210.7zM1158.3 1216.3L1163.2 1219.8L1163.6 1214.2zM1163.2 1219.8L1168.1 1223.3L1168.4 1217.6zM1168.1 1223.3L1173.0 1226.8L1173.3 1221.1zM1173.0 1226.8L1177.8 1230.3L1178.2 1224.6zM1177.8 1230.3L1182.7 1233.8L1183.1 1228.1zM1182.7 1233.8L1187.6 1237.3L1188.0 1231.6zM1187.6 1237.3L1192.5 1240.8L1192.8 1235.1zM1192.5 1240.8L1197.4 1244.2L1197.7 1238.6zM1197.4 1244.2L1202.2 1247.7L1202.6 1242.1zM1202.2 1247.7L1207.1 1251.2L1207.5 1245.6zM1207.1 1251.2L1212.0 1254.7L1212.4 1249.1zM1212.0 1254.7L1216.9 1258.2L1217.2 1252.6zM1216.9 1258.2L1221.8 1261.7L1222.1 1256.0zM1221.8 1261.7L1226.6 1265.2L1227.0 1259.5zM1226.6 1265.2L1231.5 1268.7L1231.9 1263.0zM1231.5 1268.7L1236.4 1272.2L1236.8 1266.5zM1236.4 1272.2L1241.3 1275.7L1241.6 1270.0zM1241.3 1275.7L1246.2 1279.1L1246.5 1273.5zM1246.2 1279.1L1251.0 1282.6L1251.4 1277.0zM1251.0 1282.6L1255.9 1286.1L1256.3 1280.5zM1255.9 1286.1L1260.8 1289.6L1261.2 1284.0zM1260.8 1289.6L1265.7 1293.1L1266.0 1287.5zM1265.7 1293.1L1270.6 1296.6L1270.9 1290.9zM1270.6 1296.6L1275.5 1300.1L1275.8 1294.4zM1275.5 1300.1L1280.3 1303.6L1280.7 1297.9zM1280.3 1303.6L1285.2 1307.1L1285.6 1301.4zM1285.2 1307.1L1290.1 1310.6L1290.4 1304.9zM1290.1 1310.6L1295.0 1314.1L1295.3 1308.4zM1295.0 1314.1L1299.9 1317.5L1300.2 1311.9zM1299.9 1317.5L1304.7 1321.0L1305.1 1315.4zM1304.7 1321.0L1309.6 1324.5L1310.0 1318.9zM1309.6 1324.5L1314.5 1328.0L1314.8 1322.4zM1314.5 1328.0L1319.4 1331.5L1319.7 1325.9zM1319.4 1331.5L1324.3 1335.0L1324.6 1329.3zM1324.3 1335.0L1329.1 1338.5L1329.5 1332.8zM1329.1 1338.5L1334.0 1342.0L1334.4 1336.3z" fill="#05053a"/>
<path d="M1065.6 1150L1337.2 1344.3" stroke="#05053a" stroke-width="1.6"/>
<polygon points="1038,364 1043,367 1038.5,369.5" fill="#ff0a0a"/>
<polygon points="1082,410.5 1089.5,414 1083,416" fill="#ff0a0a"/>
<polygon points="1124,274 1423.6,485.6 1470,603 1455.6,724 1471,826 1543.6,1054 1445,1286 1372.5,1369.5 1065.6,1150 1116.6,1030 1138,812 1163,639 1118,485 1027.6,373.4" fill="url(#tri)" opacity=".55"/>
</g>
<polygon points="1124,274 1423.6,485.6 1470,603 1455.6,724 1471,826 1543.6,1054 1445,1286 1372.5,1369.5 1065.6,1150 1116.6,1030 1138,812 1163,639 1118,485 1027.6,373.4" fill="none" stroke="#1c1c1c" stroke-width="1.1"/>
<polygon points="1128.4,259.6 1441.6,485.6 1494.6,608 1471,740 1555.6,1077 1454,1305 1383.75,1399.5 1037.4,1154 1090,1018 1125.2,647 1010,379.6" fill="none" stroke="#128012" stroke-width="1.5"/>
<polyline points="1084.4,335.4 1244,474 1391,531.6 1425.2,635 1410,830 1356,1002 1348,1027 1203,1218" fill="none" stroke="#9a2ee6" stroke-width="1.6"/>
<polygon points="1125.4,267.4 1135.2,274.8 1028.4,383 1021,374.4" fill="none" stroke="#0a0af5" stroke-width="1.6"/>
<polygon points="1065,1130 1393.7,1365 1373.8,1385 1052.4,1155" fill="none" stroke="#0a0af5" stroke-width="1.6"/>
</svg>
<div class="t" style="left:26px;top:6.87px;font:normal 400 14.5px/1.149 'Liberation Sans',sans-serif;letter-spacing:-0.031px;color:#000;">*MaxErosionDepth — QGIS</div><div class="t" style="left:10px;top:33.87px;font:normal 400 14.5px/1.149 'Liberation Sans',sans-serif;letter-spacing:-0.020px;color:#000;">Pro<u>j</u>ect</div><div class="t" style="left:68.5px;top:33.87px;font:normal 400 14.5px/1.149 'Liberation Sans',sans-serif;letter-spacing:-0.125px;color:#000;"><u>E</u>dit</div><div class="t" style="left:106px;top:33.87px;font:normal 400 14.5px/1.149 'Liberation Sans',sans-serif;letter-spacing:-0.043px;color:#000;"><u>V</u>iew</div><div class="t" style="left:150px;top:33.87px;font:normal 400 14.5px/1.149 'Liberation Sans',sans-serif;letter-spacing:-0.256px;color:#000;"><u>L</u>ayer</div><div class="t" style="left:197.5px;top:33.87px;font:normal 400 14.5px/1.149 'Liberation Sans',sans-serif;letter-spacing:0.012px;color:#000;"><u>S</u>ettings</div><div class="t" style="left:263.5px;top:33.87px;font:normal 400 14.5px/1.149 'Liberation Sans',sans-serif;letter-spacing:-0.080px;color:#000;"><u>P</u>lugins</div><div class="t" style="left:323.5px;top:33.87px;font:normal 400 14.5px/1.149 'Liberation Sans',sans-serif;letter-spacing:0.232px;color:#000;">Vect<u>o</u>r</div><div class="t" style="left:378.5px;top:33.87px;font:normal 400 14.5px/1.149 'Liberation Sans',sans-serif;letter-spacing:-0.203px;color:#000;"><u>R</u>aster</div><div class="t" style="left:432.5px;top:33.87px;font:normal 400 14.5px/1.149 'Liberation Sans',sans-serif;letter-spacing:-0.072px;color:#000;"><u>D</u>atabase</div><div class="t" style="left:506.5px;top:33.87px;font:normal 400 14.5px/1.149 'Liberation Sans',sans-serif;letter-spacing:0.312px;color:#000;"><u>W</u>eb</div><div class="t" style="left:550px;top:33.87px;font:normal 400 14.5px/1.149 'Liberation Sans',sans-serif;letter-spacing:0.133px;color:#000;"><u>M</u>esh</div><div class="t" style="left:599px;top:33.87px;font:normal 400 14.5px/1.149 'Liberation Sans',sans-serif;letter-spacing:-0.173px;color:#000;">Pro<u>c</u>essing</div><div class="t" style="left:682px;top:33.87px;font:normal 400 14.5px/1.149 'Liberation Sans',sans-serif;letter-spacing:0.168px;color:#000;"><u>H</u>elp</div><div class="t" style="left:298px;top:137.63px;font:normal 400 13.11px/1.149 'Liberation Sans',sans-serif;letter-spacing:-0.357px;color:#000;">base</div><div class="t" style="left:55px;top:164.28px;font:normal 400 13.5px/1.149 'Liberation Sans',sans-serif;letter-spacing:-0.422px;color:#000;">Layers</div><div class="t" style="left:34px;top:1455.78px;font:normal 400 13.5px/1.149 'Liberation Sans',sans-serif;letter-spacing:0.101px;color:#666;">Type to locate (Ctrl+K)</div><div class="t" style="left:125px;top:214.77px;font:italic 700 14.5px/1.149 'Liberation Sans',sans-serif;letter-spacing:0.244px;color:#fff;text-decoration:underline;">TriMesh [14769]</div><div class="t" style="left:125px;top:237.56px;font:normal 700 14.5px/1.149 'Liberation Sans',sans-serif;letter-spacing:0.239px;color:#000;">Domain Outline</div><div class="t" style="left:125px;top:260.35px;font:normal 700 14.5px/1.149 'Liberation Sans',sans-serif;letter-spacing:-0.050px;color:#000;">MeshDensityLine</div><div class="t" style="left:125px;top:283.14px;font:normal 700 14.5px/1.149 'Liberation Sans',sans-serif;letter-spacing:0.057px;color:#000;">Boundary Conditions</div><div class="t" style="left:125.5px;top:305.93px;font:normal 400 14.5px/1.149 'Liberation Sans',sans-serif;letter-spacing:-0.561px;color:#000;">MESH_SPATIAL_DATA</div><div class="t" style="left:150px;top:328.72px;font:normal 700 14.5px/1.149 'Liberation Sans',sans-serif;letter-spacing:0.543px;color:#000;">Manning N</div><div class="t" style="left:150px;top:351.51px;font:italic 700 14.5px/1.149 'Liberation Sans',sans-serif;letter-spacing:0.109px;color:#808080;">MaximumErosionDepth</div><div class="t" style="left:125.5px;top:374.30px;font:normal 400 14.5px/1.149 'Liberation Sans',sans-serif;letter-spacing:-0.442px;color:#000;">COMPONENTS</div><div class="t" style="left:125.5px;top:397.41px;font:normal 400 14.15px/1.149 'Liberation Sans',sans-serif;letter-spacing:-0.481px;color:#000;">OUTPUT_CONTROL</div><div class="t" style="left:125.5px;top:420.74px;font:normal 400 13.55px/1.149 'Liberation Sans',sans-serif;letter-spacing:-0.446px;color:#000;">OUTPUT_RESULTS</div><div class="t" style="left:150.5px;top:442.67px;font:normal 700 14.5px/1.149 'Liberation Sans',sans-serif;letter-spacing:-0.053px;color:#000;">DeltaBedElev_0000:02:00:00</div><div class="t" style="left:174px;top:465.46px;font:normal 400 14.5px/1.149 'Liberation Sans',sans-serif;letter-spacing:-0.013px;color:#000;">-11.0983 - -9.3548</div><div class="t" style="left:174px;top:488.25px;font:normal 400 14.5px/1.149 'Liberation Sans',sans-serif;letter-spacing:-0.010px;color:#000;">-9.3548 - -7.6112</div><div class="t" style="left:174px;top:511.04px;font:normal 400 14.5px/1.149 'Liberation Sans',sans-serif;letter-spacing:-0.010px;color:#000;">-7.6112 - -5.8677</div><div class="t" style="left:174px;top:533.83px;font:normal 400 14.5px/1.149 'Liberation Sans',sans-serif;letter-spacing:-0.103px;color:#000;">-5.8677 - -4.1241</div><div class="t" style="left:174px;top:556.62px;font:normal 400 14.5px/1.149 'Liberation Sans',sans-serif;letter-spacing:-0.074px;color:#000;">-4.1241 - -2.3806</div><div class="t" style="left:174px;top:579.41px;font:normal 400 14.5px/1.149 'Liberation Sans',sans-serif;letter-spacing:-0.074px;color:#000;">-2.3806 - -0.6370</div><div class="t" style="left:174px;top:602.20px;font:normal 400 14.5px/1.149 'Liberation Sans',sans-serif;letter-spacing:-0.151px;color:#000;">-0.6370 - 1.1065</div><div class="t" style="left:174px;top:624.99px;font:normal 400 14.5px/1.149 'Liberation Sans',sans-serif;letter-spacing:-0.240px;color:#000;">1.1065 - 2.8501</div><div class="t" style="left:125.5px;top:647.78px;font:normal 700 14.5px/1.149 'Liberation Sans',sans-serif;letter-spacing:-0.078px;color:#000;">DEM</div>
</body></html>
